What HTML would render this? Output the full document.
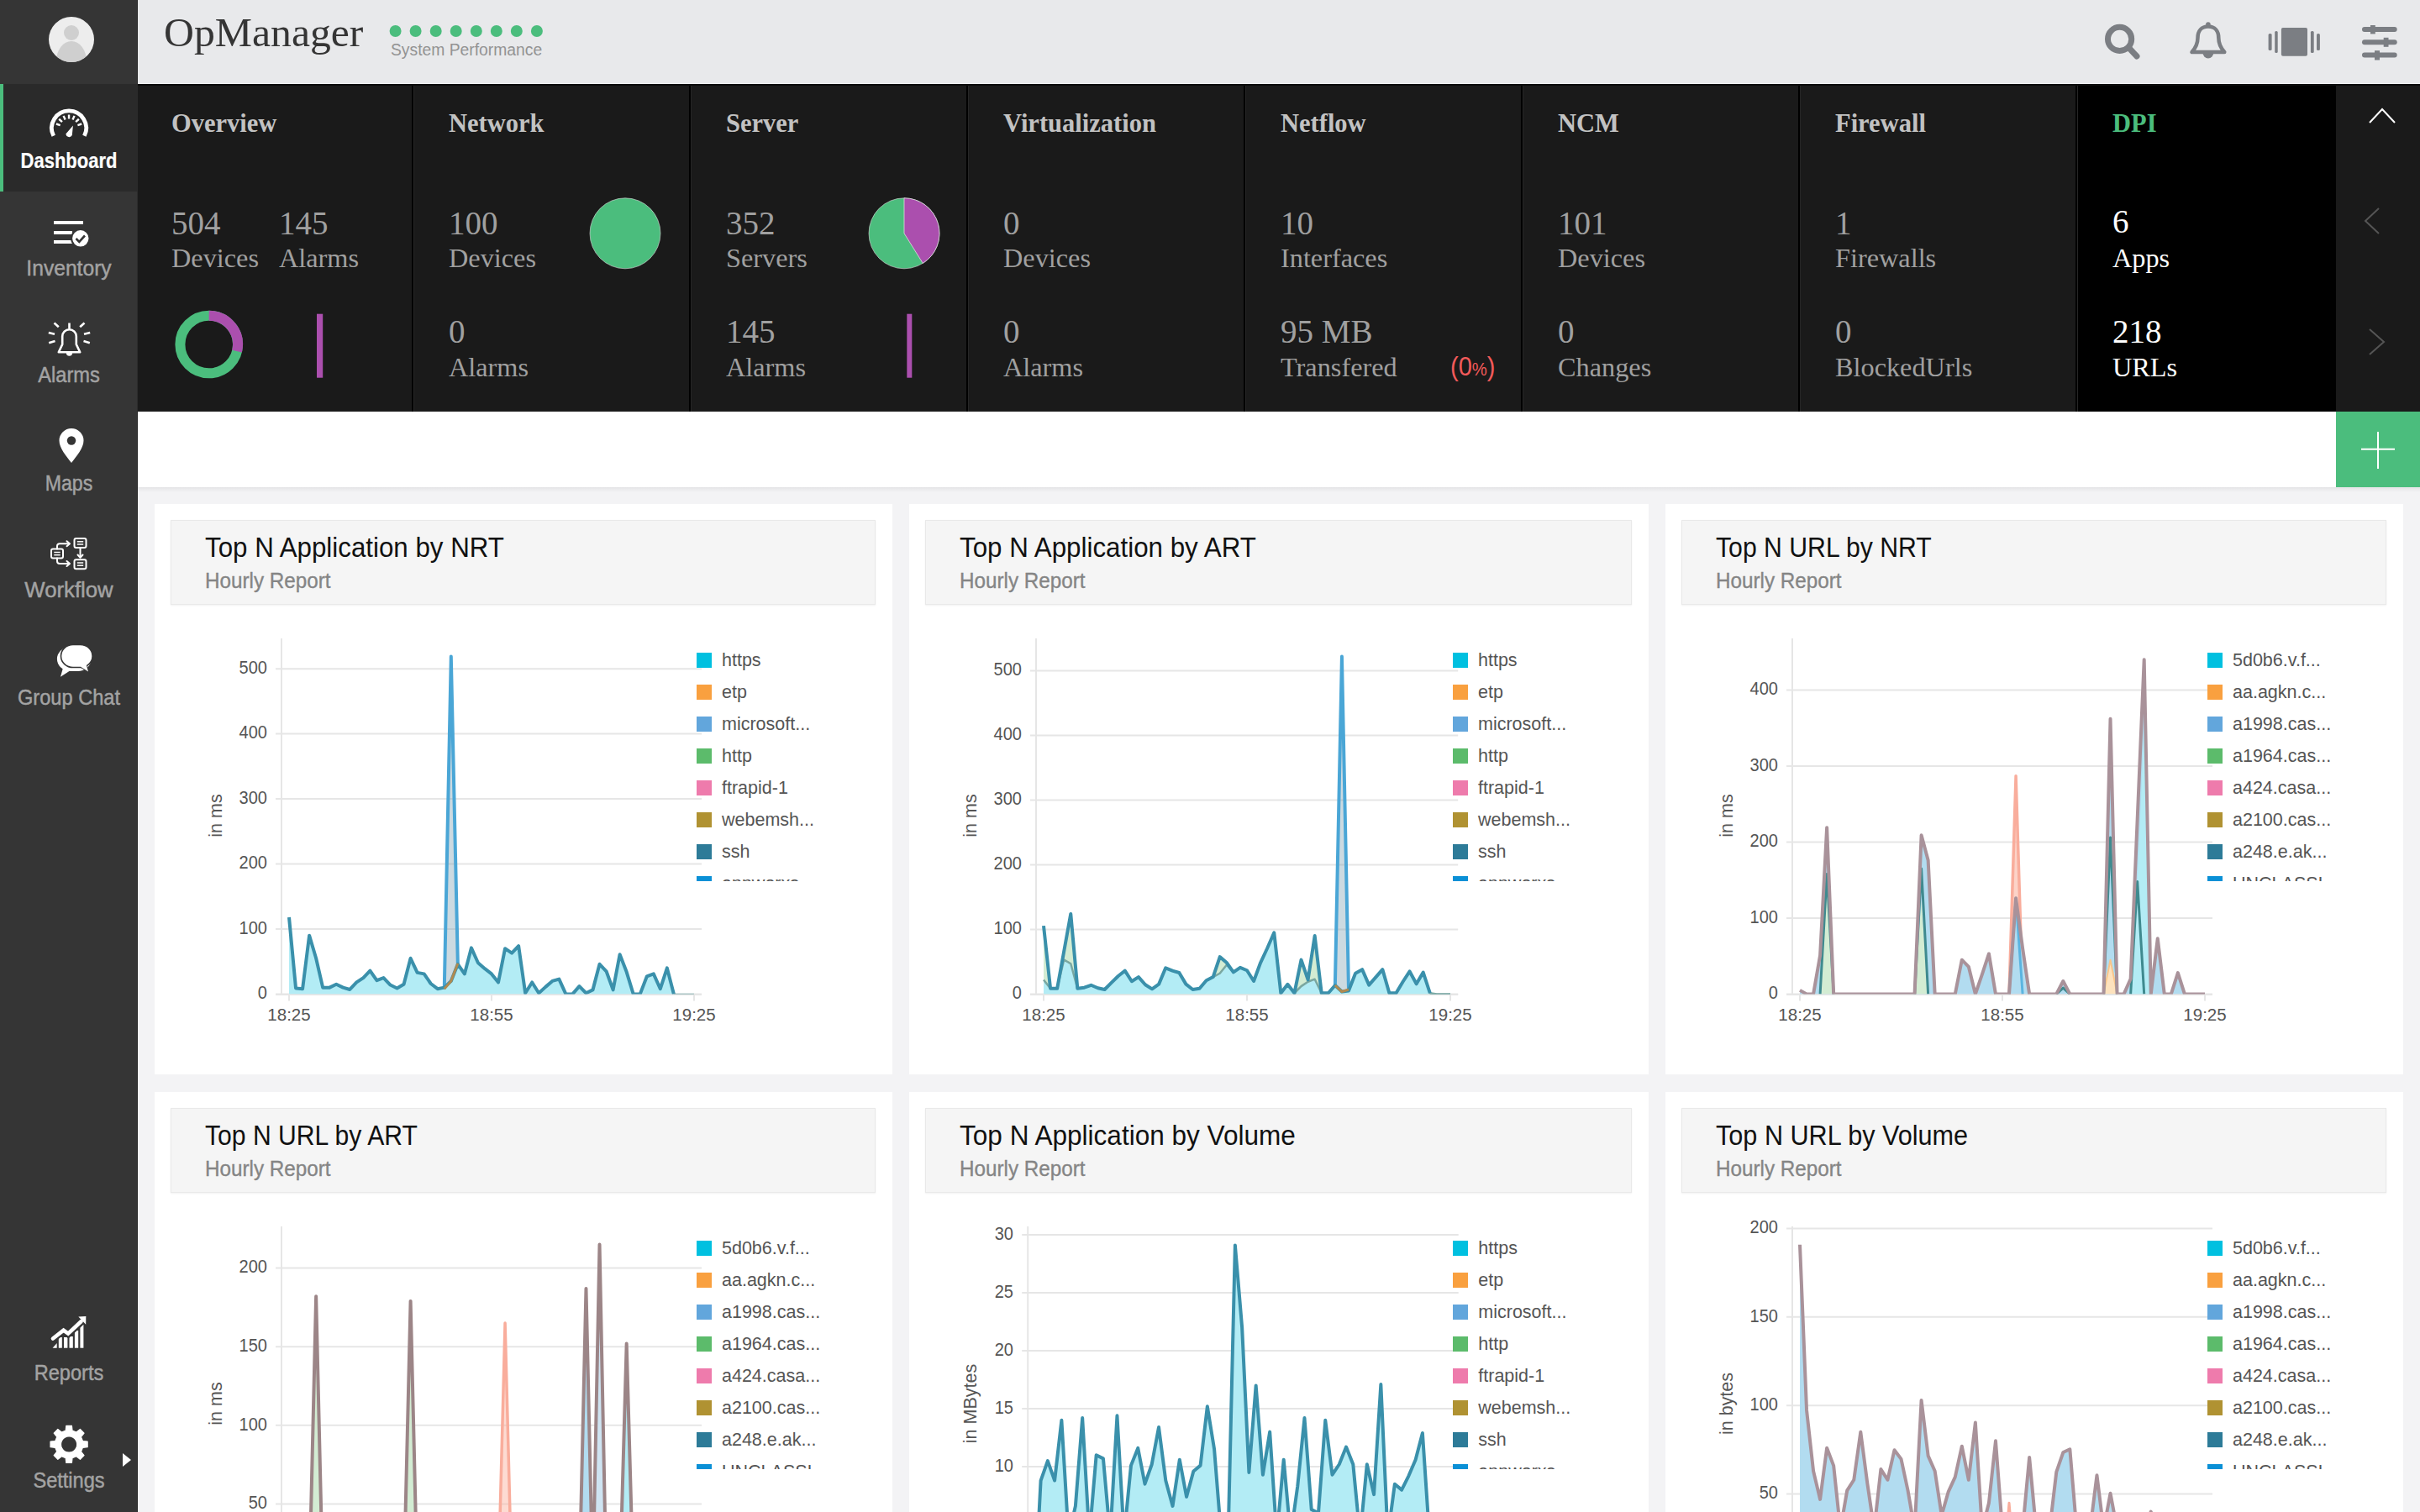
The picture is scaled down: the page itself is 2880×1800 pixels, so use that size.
<!DOCTYPE html>
<html><head><meta charset="utf-8"><title>OpManager</title>
<style>
html,body{margin:0;padding:0;}
body{width:2880px;height:1800px;overflow:hidden;position:relative;background:#f3f3f5;font-family:"Liberation Sans", sans-serif;}
</style></head><body>
<div style="position:absolute;left:0px;top:0px;width:164px;height:1800px;background:#353535;"></div>
<div style="position:absolute;left:163px;top:0px;width:1px;height:1800px;background:#2c2c2c;"></div>
<svg style="position:absolute;left:0;top:0" width="164" height="100">
<defs><clipPath id="avc"><circle cx="85" cy="47" r="27"/></clipPath></defs>
<circle cx="85" cy="47" r="27" fill="#ededed"/>
<g clip-path="url(#avc)"><circle cx="85" cy="39" r="9" fill="#cfcfcf"/>
<ellipse cx="85" cy="73" rx="18" ry="24" fill="#cfcfcf"/></g></svg>
<div style="position:absolute;left:0px;top:100px;width:164px;height:128px;background:#2a2a2a;"></div>
<div style="position:absolute;left:0px;top:100px;width:4px;height:128px;background:#4bbd7d;"></div>
<svg style="position:absolute;left:0;top:101px" width="164" height="128">
<path d="M63.74 60.73 A20.55 20.55 0 1 1 100.36 60.73" fill="none" stroke="#fff" stroke-width="4.8"/>
<g stroke="#fff" stroke-width="2.4" stroke-linecap="butt">
<line x1="71.68" y1="48.03" x2="66.93" y2="46.49"/><line x1="73.95" y1="44.11" x2="70.23" y2="40.76"/><line x1="77.62" y1="41.44" x2="75.58" y2="36.87"/><line x1="82.05" y1="40.50" x2="82.05" y2="35.50"/><line x1="86.48" y1="41.44" x2="88.52" y2="36.87"/><line x1="90.15" y1="44.11" x2="93.87" y2="40.76"/><line x1="92.42" y1="48.03" x2="97.17" y2="46.49"/>
</g>
<path d="M78.3 58.6 L86.9 48.6 L85.8 60 A4 4 0 0 1 78.3 58.6 Z" fill="#fff"/>
</svg>
<div style="position:absolute;left:82.00px;top:178.84px;font-family:'Liberation Sans', sans-serif;font-size:25px;line-height:25px;font-weight:700;color:#fff;white-space:nowrap;transform:translateX(-50%) scaleX(0.88);transform-origin:center center;-webkit-text-stroke:0.2px #fff;">Dashboard</div>
<svg style="position:absolute;left:0;top:240px" width="164" height="100">
<rect x="64" y="23" width="35" height="4" fill="#fff"/>
<rect x="64" y="35" width="22" height="4" fill="#fff"/>
<rect x="64" y="46" width="22" height="4" fill="#fff"/>
<circle cx="95.8" cy="43.8" r="10.7" fill="#fff" stroke="#353535" stroke-width="2"/>
<path d="M90.5 44 L94.3 47.8 L101 40.5" fill="none" stroke="#353535" stroke-width="2.6"/>
</svg>
<div style="position:absolute;left:82.00px;top:306.84px;font-family:'Liberation Sans', sans-serif;font-size:25px;line-height:25px;font-weight:400;color:#a3a3a3;white-space:nowrap;transform:translateX(-50%) scaleX(0.985);transform-origin:center center;-webkit-text-stroke:0.45px #a3a3a3;">Inventory</div>
<svg style="position:absolute;left:0;top:370px" width="164" height="60">
<path d="M69.8 49.3 L74.2 40 L74.2 30.5 A8.3 8.3 0 0 1 90.8 30.5 L90.8 40 L95.2 49.3 Z" fill="none" stroke="#fff" stroke-width="2.6" stroke-linejoin="round"/>
<line x1="82.5" y1="14.5" x2="82.5" y2="21.5" stroke="#fff" stroke-width="2.6"/>
<path d="M78.8 50 A3.7 3.7 0 0 0 86.2 50 Z" fill="#fff"/>
<g stroke="#fff" stroke-width="2.6" stroke-linecap="butt">
<line x1="64.5" y1="14.5" x2="69.8" y2="19.3"/>
<line x1="100.5" y1="14.5" x2="95.2" y2="19.3"/>
<line x1="57.8" y1="26" x2="65" y2="27.8"/>
<line x1="107.2" y1="26" x2="100" y2="27.8"/>
<line x1="58.2" y1="38.3" x2="65.5" y2="36"/>
<line x1="106.8" y1="38.3" x2="99.5" y2="36"/>
</g></svg>
<div style="position:absolute;left:82.00px;top:434.34px;font-family:'Liberation Sans', sans-serif;font-size:25px;line-height:25px;font-weight:400;color:#a3a3a3;white-space:nowrap;transform:translateX(-50%) scaleX(0.946);transform-origin:center center;-webkit-text-stroke:0.45px #a3a3a3;">Alarms</div>
<svg style="position:absolute;left:0;top:500px" width="164" height="60">
<path d="M85 51 C79 43 70.5 33.5 70.5 24.5 A14.5 14.5 0 0 1 99.5 24.5 C99.5 33.5 91 43 85 51 Z" fill="#fff"/>
<circle cx="85" cy="24.5" r="5.2" fill="#353535"/>
</svg>
<div style="position:absolute;left:82.00px;top:562.84px;font-family:'Liberation Sans', sans-serif;font-size:25px;line-height:25px;font-weight:400;color:#a3a3a3;white-space:nowrap;transform:translateX(-50%) scaleX(0.925);transform-origin:center center;-webkit-text-stroke:0.45px #a3a3a3;">Maps</div>
<svg style="position:absolute;left:0;top:630px" width="164" height="60">
<g fill="none" stroke="#fff" stroke-width="2" stroke-linecap="round" stroke-linejoin="round">
<rect x="88.5" y="11" width="14" height="11" rx="2"/>
<rect x="61" y="23.6" width="14" height="10.8" rx="2"/>
<rect x="88.5" y="36.2" width="14" height="11" rx="2"/>
<path d="M68 23.6 V20 Q68 17.2 71 17.2 H82"/>
<path d="M68 34.4 V38 Q68 41 71 41 H82"/>
<path d="M95.5 22 V33"/>
<path d="M79.5 14.2 L83 17.2 L79.5 20.2"/>
<path d="M79.5 38 L83 41 L79.5 44"/>
<path d="M92.5 30.5 L95.5 33.8 L98.5 30.5"/>
</g>
<g stroke="#fff" stroke-width="1.5"><line x1="91.8" y1="14.8" x2="99.2" y2="14.8"/><line x1="91.8" y1="18" x2="99.2" y2="18"/>
<line x1="64.3" y1="27.5" x2="71.7" y2="27.5"/><line x1="64.3" y1="30.7" x2="71.7" y2="30.7"/>
<line x1="91.8" y1="40" x2="99.2" y2="40"/><line x1="91.8" y1="43.2" x2="99.2" y2="43.2"/></g>
</svg>
<div style="position:absolute;left:82.00px;top:690.34px;font-family:'Liberation Sans', sans-serif;font-size:25px;line-height:25px;font-weight:400;color:#a3a3a3;white-space:nowrap;transform:translateX(-50%) scaleX(1.03);transform-origin:center center;-webkit-text-stroke:0.45px #a3a3a3;">Workflow</div>
<svg style="position:absolute;left:0;top:760px" width="164" height="60">
<rect x="67.9" y="10" width="40.6" height="29" rx="16" ry="14.5" fill="#fff"/>
<path d="M75 35 L72 45.7 L84 38 Z" fill="#fff"/>
<path d="M96.5 34.2 L105 39.5 L103.2 32.7 Z" fill="#fff" stroke="#353535" stroke-width="1.6" stroke-linejoin="miter"/>
<rect x="72.5" y="7.5" width="37.6" height="27" rx="14.5" ry="13.5" fill="#fff" stroke="#353535" stroke-width="1.6"/>
<path d="M95.5 33.6 L105 39.5 L102.7 31.5 Z" fill="#fff"/>
</svg>
<div style="position:absolute;left:82.00px;top:817.84px;font-family:'Liberation Sans', sans-serif;font-size:25px;line-height:25px;font-weight:400;color:#a3a3a3;white-space:nowrap;transform:translateX(-50%) scaleX(0.944);transform-origin:center center;-webkit-text-stroke:0.45px #a3a3a3;">Group Chat</div>
<svg style="position:absolute;left:0;top:1550px" width="164" height="60">
<g fill="#fff">
<path d="M62.6 54.7 L67.7 49 L67.7 54.7 Z"/>
<rect x="69.8" y="42" width="4" height="12.7"/>
<rect x="76" y="42" width="4.4" height="12.7"/>
<rect x="82.5" y="41" width="4.3" height="13.7"/>
<rect x="88.9" y="34" width="4.3" height="20.7"/>
<rect x="95.4" y="27" width="4" height="27.7"/>
</g>
<path d="M62.5 44 L75.6 33.6 L81.1 37.6 L97.5 22.5" fill="none" stroke="#353535" stroke-width="9" stroke-linejoin="miter" stroke-linecap="round"/>
<path d="M63 43.5 L75.6 33.6 L81.1 37.6 L96.5 23.3" fill="none" stroke="#fff" stroke-width="4.6" stroke-linejoin="miter" stroke-linecap="round"/>
<path d="M93.3 17.4 L102.3 17 L102.2 26.7 Z" fill="#fff"/>
</svg>
<div style="position:absolute;left:82.00px;top:1621.84px;font-family:'Liberation Sans', sans-serif;font-size:25px;line-height:25px;font-weight:400;color:#a3a3a3;white-space:nowrap;transform:translateX(-50%) scaleX(0.943);transform-origin:center center;-webkit-text-stroke:0.45px #a3a3a3;">Reports</div>
<svg style="position:absolute;left:0;top:1690px" width="164" height="110">
<path fill="#fff" fill-rule="evenodd" stroke="#fff" stroke-width="1.2" stroke-linejoin="round" d="M78.18 13.06 L78.80 7.34 L85.40 7.34 L86.02 13.06 L90.88 15.08 L95.36 11.47 L100.03 16.14 L96.42 20.62 L98.44 25.48 L104.16 26.10 L104.16 32.70 L98.44 33.32 L96.42 38.18 L100.03 42.66 L95.36 47.33 L90.88 43.72 L86.02 45.74 L85.40 51.46 L78.80 51.46 L78.18 45.74 L73.32 43.72 L68.84 47.33 L64.17 42.66 L67.78 38.18 L65.76 33.32 L60.04 32.70 L60.04 26.10 L65.76 25.48 L67.78 20.62 L64.17 16.14 L68.84 11.47 L73.32 15.08 Z M82.10 19.80 A9.6 9.6 0 1 0 82.11 19.80 Z"/>
<path d="M146 40 L156 48 L146 56 Z" fill="#fff"/>
</svg>
<div style="position:absolute;left:82.00px;top:1749.84px;font-family:'Liberation Sans', sans-serif;font-size:25px;line-height:25px;font-weight:400;color:#a3a3a3;white-space:nowrap;transform:translateX(-50%) scaleX(0.943);transform-origin:center center;-webkit-text-stroke:0.45px #a3a3a3;">Settings</div>
<div style="position:absolute;left:164px;top:0px;width:2716px;height:100px;background:#e8e9eb;"></div>
<div style="position:absolute;left:164px;top:99px;width:2716px;height:1px;background:#f3f4f5;"></div>
<div style="position:absolute;left:195.00px;top:15.38px;font-family:'Liberation Serif', serif;font-size:48.5px;line-height:48.5px;font-weight:400;color:#353535;white-space:nowrap;transform:scaleX(1.025);transform-origin:left center;">OpManager</div>
<svg style="position:absolute;left:0;top:0" width="700" height="100"><circle cx="470.6" cy="37" r="7" fill="#4bbd7d"/><circle cx="494.6" cy="37" r="7" fill="#4bbd7d"/><circle cx="518.7" cy="37" r="7" fill="#4bbd7d"/><circle cx="542.7" cy="37" r="7" fill="#4bbd7d"/><circle cx="566.8" cy="37" r="7" fill="#4bbd7d"/><circle cx="590.8" cy="37" r="7" fill="#4bbd7d"/><circle cx="614.8" cy="37" r="7" fill="#4bbd7d"/><circle cx="638.9" cy="37" r="7" fill="#4bbd7d"/></svg>
<div style="position:absolute;left:464.50px;top:49.07px;font-family:'Liberation Sans', sans-serif;font-size:20px;line-height:20px;font-weight:400;color:#939393;white-space:nowrap;transform:scaleX(0.965);transform-origin:left center;">System Performance</div>
<svg style="position:absolute;left:2480px;top:0" width="400" height="100">
<circle cx="42.6" cy="46.4" r="14.1" fill="none" stroke="#7b7e83" stroke-width="7"/>
<line x1="55" y1="58.5" x2="63" y2="67" stroke="#7b7e83" stroke-width="7" stroke-linecap="round"/>
<path d="M147.9 31.5 C140 31.5 135.5 37 135.5 45 C135.5 52 133 57 128.5 62 L167.3 62 C162.8 57 160.3 52 160.3 45 C160.3 37 155.8 31.5 147.9 31.5 Z" fill="none" stroke="#7b7e83" stroke-width="4.5" stroke-linejoin="round"/>
<circle cx="147.9" cy="29" r="2.8" fill="#7b7e83"/>
<path d="M141.5 63 A6.4 6.4 0 0 0 154.3 63 Z" fill="#7b7e83"/>
<rect x="234.9" y="33" width="31.1" height="33.8" rx="2" fill="#7b7e83"/>
<rect x="227.2" y="37" width="3.5" height="26" rx="1.5" fill="#7b7e83"/>
<rect x="219.6" y="40" width="4" height="20" rx="1.5" fill="#7b7e83"/>
<rect x="269.9" y="37" width="3.8" height="26" rx="1.5" fill="#7b7e83"/>
<rect x="277" y="40" width="3.9" height="20" rx="1.5" fill="#7b7e83"/>
<g stroke="#7b7e83" stroke-width="6" stroke-linecap="round">
<line x1="334" y1="35.1" x2="369.7" y2="35.1"/>
<line x1="334" y1="50.3" x2="369.7" y2="50.3"/>
<line x1="334" y1="65.6" x2="369.7" y2="65.6"/>
</g>
<rect x="341" y="30" width="5.8" height="10.4" fill="#7b7e83"/>
<rect x="356.7" y="44.8" width="5.8" height="11" fill="#7b7e83"/>
<rect x="346" y="60.2" width="6" height="11.3" fill="#7b7e83"/>
</svg>
<div style="position:absolute;left:164px;top:100px;width:2716px;height:390px;background:#1a1a1a;"></div>
<div style="position:absolute;left:2473px;top:100px;width:307px;height:390px;background:#000;"></div>
<div style="position:absolute;left:490px;top:100px;width:2px;height:390px;background:#000;"></div>
<div style="position:absolute;left:492px;top:100px;width:1px;height:390px;background:#262626;"></div>
<div style="position:absolute;left:820px;top:100px;width:2px;height:390px;background:#000;"></div>
<div style="position:absolute;left:822px;top:100px;width:1px;height:390px;background:#262626;"></div>
<div style="position:absolute;left:1150px;top:100px;width:2px;height:390px;background:#000;"></div>
<div style="position:absolute;left:1152px;top:100px;width:1px;height:390px;background:#262626;"></div>
<div style="position:absolute;left:1480px;top:100px;width:2px;height:390px;background:#000;"></div>
<div style="position:absolute;left:1482px;top:100px;width:1px;height:390px;background:#262626;"></div>
<div style="position:absolute;left:1810px;top:100px;width:2px;height:390px;background:#000;"></div>
<div style="position:absolute;left:1812px;top:100px;width:1px;height:390px;background:#262626;"></div>
<div style="position:absolute;left:2140px;top:100px;width:2px;height:390px;background:#000;"></div>
<div style="position:absolute;left:2142px;top:100px;width:1px;height:390px;background:#262626;"></div>
<div style="position:absolute;left:2470px;top:100px;width:2px;height:390px;background:#000;"></div>
<div style="position:absolute;left:2472px;top:100px;width:1px;height:390px;background:#262626;"></div>
<div style="position:absolute;left:164px;top:100px;width:2716px;height:2px;background:#0a0a0a;"></div>
<div style="position:absolute;left:204.00px;top:132.46px;font-family:'Liberation Serif', serif;font-size:30.5px;line-height:30.5px;font-weight:700;color:#c2c2c2;white-space:nowrap;">Overview</div>
<div style="position:absolute;left:534.00px;top:132.46px;font-family:'Liberation Serif', serif;font-size:30.5px;line-height:30.5px;font-weight:700;color:#c2c2c2;white-space:nowrap;">Network</div>
<div style="position:absolute;left:864.00px;top:132.46px;font-family:'Liberation Serif', serif;font-size:30.5px;line-height:30.5px;font-weight:700;color:#c2c2c2;white-space:nowrap;">Server</div>
<div style="position:absolute;left:1194.00px;top:132.46px;font-family:'Liberation Serif', serif;font-size:30.5px;line-height:30.5px;font-weight:700;color:#c2c2c2;white-space:nowrap;">Virtualization</div>
<div style="position:absolute;left:1524.00px;top:132.46px;font-family:'Liberation Serif', serif;font-size:30.5px;line-height:30.5px;font-weight:700;color:#c2c2c2;white-space:nowrap;">Netflow</div>
<div style="position:absolute;left:1854.00px;top:132.46px;font-family:'Liberation Serif', serif;font-size:30.5px;line-height:30.5px;font-weight:700;color:#c2c2c2;white-space:nowrap;">NCM</div>
<div style="position:absolute;left:2184.00px;top:132.46px;font-family:'Liberation Serif', serif;font-size:30.5px;line-height:30.5px;font-weight:700;color:#c2c2c2;white-space:nowrap;">Firewall</div>
<div style="position:absolute;left:2514.00px;top:132.46px;font-family:'Liberation Serif', serif;font-size:30.5px;line-height:30.5px;font-weight:700;color:#4bbd7d;white-space:nowrap;">DPI</div>
<div style="position:absolute;left:204.00px;top:245.54px;font-family:'Liberation Serif', serif;font-size:39px;line-height:39px;font-weight:400;color:#a0a0a0;white-space:nowrap;">504</div>
<div style="position:absolute;left:204.00px;top:291.62px;font-family:'Liberation Serif', serif;font-size:31.5px;line-height:31.5px;font-weight:400;color:#a0a0a0;white-space:nowrap;transform:scaleX(1.025);transform-origin:left center;">Devices</div>
<div style="position:absolute;left:332.00px;top:245.54px;font-family:'Liberation Serif', serif;font-size:39px;line-height:39px;font-weight:400;color:#a0a0a0;white-space:nowrap;">145</div>
<div style="position:absolute;left:332.00px;top:291.62px;font-family:'Liberation Serif', serif;font-size:31.5px;line-height:31.5px;font-weight:400;color:#a0a0a0;white-space:nowrap;transform:scaleX(1.025);transform-origin:left center;">Alarms</div>
<div style="position:absolute;left:534.00px;top:245.54px;font-family:'Liberation Serif', serif;font-size:39px;line-height:39px;font-weight:400;color:#a0a0a0;white-space:nowrap;">100</div>
<div style="position:absolute;left:534.00px;top:291.62px;font-family:'Liberation Serif', serif;font-size:31.5px;line-height:31.5px;font-weight:400;color:#a0a0a0;white-space:nowrap;transform:scaleX(1.025);transform-origin:left center;">Devices</div>
<div style="position:absolute;left:534.00px;top:374.84px;font-family:'Liberation Serif', serif;font-size:39px;line-height:39px;font-weight:400;color:#a0a0a0;white-space:nowrap;">0</div>
<div style="position:absolute;left:534.00px;top:421.62px;font-family:'Liberation Serif', serif;font-size:31.5px;line-height:31.5px;font-weight:400;color:#a0a0a0;white-space:nowrap;transform:scaleX(1.025);transform-origin:left center;">Alarms</div>
<div style="position:absolute;left:864.00px;top:245.54px;font-family:'Liberation Serif', serif;font-size:39px;line-height:39px;font-weight:400;color:#a0a0a0;white-space:nowrap;">352</div>
<div style="position:absolute;left:864.00px;top:291.62px;font-family:'Liberation Serif', serif;font-size:31.5px;line-height:31.5px;font-weight:400;color:#a0a0a0;white-space:nowrap;transform:scaleX(1.025);transform-origin:left center;">Servers</div>
<div style="position:absolute;left:864.00px;top:374.84px;font-family:'Liberation Serif', serif;font-size:39px;line-height:39px;font-weight:400;color:#a0a0a0;white-space:nowrap;">145</div>
<div style="position:absolute;left:864.00px;top:421.62px;font-family:'Liberation Serif', serif;font-size:31.5px;line-height:31.5px;font-weight:400;color:#a0a0a0;white-space:nowrap;transform:scaleX(1.025);transform-origin:left center;">Alarms</div>
<div style="position:absolute;left:1194.00px;top:245.54px;font-family:'Liberation Serif', serif;font-size:39px;line-height:39px;font-weight:400;color:#a0a0a0;white-space:nowrap;">0</div>
<div style="position:absolute;left:1194.00px;top:291.62px;font-family:'Liberation Serif', serif;font-size:31.5px;line-height:31.5px;font-weight:400;color:#a0a0a0;white-space:nowrap;transform:scaleX(1.025);transform-origin:left center;">Devices</div>
<div style="position:absolute;left:1194.00px;top:374.84px;font-family:'Liberation Serif', serif;font-size:39px;line-height:39px;font-weight:400;color:#a0a0a0;white-space:nowrap;">0</div>
<div style="position:absolute;left:1194.00px;top:421.62px;font-family:'Liberation Serif', serif;font-size:31.5px;line-height:31.5px;font-weight:400;color:#a0a0a0;white-space:nowrap;transform:scaleX(1.025);transform-origin:left center;">Alarms</div>
<div style="position:absolute;left:1524.00px;top:245.54px;font-family:'Liberation Serif', serif;font-size:39px;line-height:39px;font-weight:400;color:#a0a0a0;white-space:nowrap;">10</div>
<div style="position:absolute;left:1524.00px;top:291.62px;font-family:'Liberation Serif', serif;font-size:31.5px;line-height:31.5px;font-weight:400;color:#a0a0a0;white-space:nowrap;transform:scaleX(1.025);transform-origin:left center;">Interfaces</div>
<div style="position:absolute;left:1524.00px;top:374.84px;font-family:'Liberation Serif', serif;font-size:39px;line-height:39px;font-weight:400;color:#a0a0a0;white-space:nowrap;">95 MB</div>
<div style="position:absolute;left:1524.00px;top:421.62px;font-family:'Liberation Serif', serif;font-size:31.5px;line-height:31.5px;font-weight:400;color:#a0a0a0;white-space:nowrap;transform:scaleX(1.025);transform-origin:left center;">Transfered</div>
<div style="position:absolute;left:1854.00px;top:245.54px;font-family:'Liberation Serif', serif;font-size:39px;line-height:39px;font-weight:400;color:#a0a0a0;white-space:nowrap;">101</div>
<div style="position:absolute;left:1854.00px;top:291.62px;font-family:'Liberation Serif', serif;font-size:31.5px;line-height:31.5px;font-weight:400;color:#a0a0a0;white-space:nowrap;transform:scaleX(1.025);transform-origin:left center;">Devices</div>
<div style="position:absolute;left:1854.00px;top:374.84px;font-family:'Liberation Serif', serif;font-size:39px;line-height:39px;font-weight:400;color:#a0a0a0;white-space:nowrap;">0</div>
<div style="position:absolute;left:1854.00px;top:421.62px;font-family:'Liberation Serif', serif;font-size:31.5px;line-height:31.5px;font-weight:400;color:#a0a0a0;white-space:nowrap;transform:scaleX(1.025);transform-origin:left center;">Changes</div>
<div style="position:absolute;left:2184.00px;top:245.54px;font-family:'Liberation Serif', serif;font-size:39px;line-height:39px;font-weight:400;color:#a0a0a0;white-space:nowrap;">1</div>
<div style="position:absolute;left:2184.00px;top:291.62px;font-family:'Liberation Serif', serif;font-size:31.5px;line-height:31.5px;font-weight:400;color:#a0a0a0;white-space:nowrap;transform:scaleX(1.025);transform-origin:left center;">Firewalls</div>
<div style="position:absolute;left:2184.00px;top:374.84px;font-family:'Liberation Serif', serif;font-size:39px;line-height:39px;font-weight:400;color:#a0a0a0;white-space:nowrap;">0</div>
<div style="position:absolute;left:2184.00px;top:421.62px;font-family:'Liberation Serif', serif;font-size:31.5px;line-height:31.5px;font-weight:400;color:#a0a0a0;white-space:nowrap;transform:scaleX(1.025);transform-origin:left center;">BlockedUrls</div>
<div style="position:absolute;left:2514.00px;top:244.34px;font-family:'Liberation Serif', serif;font-size:39px;line-height:39px;font-weight:400;color:#ffffff;white-space:nowrap;">6</div>
<div style="position:absolute;left:2514.00px;top:291.62px;font-family:'Liberation Serif', serif;font-size:31.5px;line-height:31.5px;font-weight:400;color:#ffffff;white-space:nowrap;transform:scaleX(1.025);transform-origin:left center;">Apps</div>
<div style="position:absolute;left:2514.00px;top:374.84px;font-family:'Liberation Serif', serif;font-size:39px;line-height:39px;font-weight:400;color:#ffffff;white-space:nowrap;">218</div>
<div style="position:absolute;left:2514.00px;top:421.62px;font-family:'Liberation Serif', serif;font-size:31.5px;line-height:31.5px;font-weight:400;color:#ffffff;white-space:nowrap;transform:scaleX(1.025);transform-origin:left center;">URLs</div>
<div style="position:absolute;left:1726.00px;top:421.34px;font-family:'Liberation Sans', sans-serif;font-size:31.5px;line-height:31.5px;font-weight:400;color:#f25a5a;white-space:nowrap;transform:scaleX(0.92);transform-origin:left center;">(0<span style="font-size:22px">%</span>)</div>
<svg style="position:absolute;left:0;top:0" width="1200" height="490">
<circle cx="248.7" cy="410" r="34.3" fill="none" stroke="#4bbd7d" stroke-width="12"/>
<path d="M248.70 375.70 A34.3 34.3 0 0 1 282.04 418.07" fill="none" stroke="#ab4fae" stroke-width="12"/>
<line x1="282.04" y1="418.07" x2="276.21" y2="416.65" stroke="#1a1a1a" stroke-width="0"/>
<rect x="377" y="373.7" width="7.2" height="76" fill="#ab4fae"/>
<circle cx="744" cy="277.8" r="42" fill="#4bbd7d" stroke="#ddd" stroke-width="0.6"/>
<circle cx="1076" cy="277.8" r="42" fill="#4bbd7d" stroke="#ddd" stroke-width="0.6"/>
<path d="M1076 277.8 L1076.00 235.80 A42 42 0 0 1 1098.26 313.42 Z" fill="#ab4fae" stroke="#ddd" stroke-width="0.8"/>
<rect x="1079.3" y="373.7" width="6" height="76" fill="#ab4fae"/>
</svg>
<svg style="position:absolute;left:2780px;top:100px" width="100" height="390">
<path d="M40 46 L55 30 L70 46" fill="none" stroke="#fff" stroke-width="2"/>
<path d="M51 178 L35 163 L51 148" fill="none" stroke="#555" stroke-width="2"/>
<path d="M40 292 L57 307 L40 322" fill="none" stroke="#555" stroke-width="2"/>
</svg>
<div style="position:absolute;left:164px;top:490px;width:2616px;height:90px;background:#fff;"></div>
<div style="position:absolute;left:164px;top:580px;width:2716px;height:6px;background:linear-gradient(#e4e4e6,#f3f3f5);"></div>
<div style="position:absolute;left:2780px;top:490px;width:100px;height:90px;background:#4bbd7d;"></div>
<svg style="position:absolute;left:2780px;top:490px" width="100" height="90">
<line x1="30" y1="44.7" x2="70" y2="44.7" stroke="#fff" stroke-width="2"/>
<line x1="50" y1="24" x2="50" y2="68" stroke="#fff" stroke-width="2"/>
</svg>
<div style="position:absolute;left:184px;top:600px;width:878px;height:679px;background:#fff;"></div>
<div style="position:absolute;left:203px;top:619px;width:839px;height:101px;background:#f5f5f5;border:1px solid #e9e9e9;box-sizing:border-box;box-shadow:0 1px 2px rgba(0,0,0,0.06);"></div>
<div style="position:absolute;left:244.00px;top:635.47px;font-family:'Liberation Sans', sans-serif;font-size:33px;line-height:33px;font-weight:400;color:#111;white-space:nowrap;transform:scaleX(0.948);transform-origin:left center;">Top N Application by NRT</div>
<div style="position:absolute;left:244.00px;top:678.84px;font-family:'Liberation Sans', sans-serif;font-size:25px;line-height:25px;font-weight:400;color:#858585;white-space:nowrap;transform:scaleX(0.97);transform-origin:left center;-webkit-text-stroke:0.35px #858585;">Hourly Report</div>
<svg style="position:absolute;left:184px;top:600px;overflow:hidden" width="878" height="700"><defs><clipPath id="pc184600"><rect x="151" y="100" width="500" height="483.40"/></clipPath></defs><line x1="144" y1="583.40" x2="651" y2="583.40" stroke="#e6e6e6" stroke-width="2"/><line x1="144" y1="505.95" x2="651" y2="505.95" stroke="#e6e6e6" stroke-width="2"/><line x1="144" y1="428.50" x2="651" y2="428.50" stroke="#e6e6e6" stroke-width="2"/><line x1="144" y1="351.05" x2="651" y2="351.05" stroke="#e6e6e6" stroke-width="2"/><line x1="144" y1="273.60" x2="651" y2="273.60" stroke="#e6e6e6" stroke-width="2"/><line x1="144" y1="196.15" x2="651" y2="196.15" stroke="#e6e6e6" stroke-width="2"/><line x1="151" y1="160" x2="151" y2="584.40" stroke="#e6e6e6" stroke-width="2"/><line x1="144" y1="584.00" x2="651" y2="584.00" stroke="#e6e6e6" stroke-width="2"/><line x1="160.00" y1="583.40" x2="160.00" y2="591.40" stroke="#e6e6e6" stroke-width="2"/><line x1="401.00" y1="583.40" x2="401.00" y2="591.40" stroke="#e6e6e6" stroke-width="2"/><line x1="642.00" y1="583.40" x2="642.00" y2="591.40" stroke="#e6e6e6" stroke-width="2"/><g clip-path="url(#pc184600)"><path d="M160.00 492.01 L168.03 576.43 L176.07 577.20 L184.10 513.69 L192.13 540.80 L200.17 575.65 L208.20 575.65 L216.23 571.78 L224.27 575.65 L232.30 577.98 L240.33 569.46 L248.37 564.04 L256.40 555.52 L264.43 567.14 L272.47 564.04 L280.50 572.56 L288.53 576.43 L296.57 571.78 L304.60 540.80 L312.63 557.84 L320.67 559.39 L328.70 571.01 L336.73 577.20 L344.77 575.65 L352.80 567.91 L360.83 547.77 L368.87 559.39 L376.90 528.41 L384.93 546.22 L392.97 553.19 L401.00 559.39 L409.03 569.46 L417.07 529.18 L425.10 534.61 L433.13 526.09 L441.17 582.24 L449.20 569.46 L457.23 582.24 L465.27 574.88 L473.30 567.91 L481.33 565.59 L489.37 583.40 L497.40 583.40 L505.43 574.11 L513.47 582.24 L521.50 578.37 L529.53 547.77 L537.57 556.29 L545.60 578.37 L553.63 536.16 L561.67 557.07 L569.70 583.40 L577.73 583.40 L585.77 562.49 L593.80 559.39 L601.83 577.20 L609.87 552.42 L617.90 583.40 L625.93 583.40 L633.97 583.40 L642.00 583.40 L642.00 583.40 L160.00 583.40 Z" fill="#b3ecf5" stroke="none"/><path d="M344.77 577.20 L352.80 181.43 L360.83 547.00 L360.83 547.00 L352.80 567.91 L344.77 577.20 Z" fill="rgba(110,150,170,0.35)" stroke="none"/><path d="M344.77 577.20 L352.80 181.43 L360.83 547.00" fill="none" stroke="#4aa6d6" stroke-width="4" stroke-linejoin="round"/><path d="M160.00 492.01 L168.03 576.43 L176.07 577.20 L184.10 513.69 L192.13 540.80 L200.17 575.65 L208.20 575.65 L216.23 571.78 L224.27 575.65 L232.30 577.98 L240.33 569.46 L248.37 564.04 L256.40 555.52 L264.43 567.14 L272.47 564.04 L280.50 572.56 L288.53 576.43 L296.57 571.78 L304.60 540.80 L312.63 557.84 L320.67 559.39 L328.70 571.01 L336.73 577.20 L344.77 575.65 L352.80 567.91 L360.83 547.77 L368.87 559.39 L376.90 528.41 L384.93 546.22 L392.97 553.19 L401.00 559.39 L409.03 569.46 L417.07 529.18 L425.10 534.61 L433.13 526.09 L441.17 582.24 L449.20 569.46 L457.23 582.24 L465.27 574.88 L473.30 567.91 L481.33 565.59 L489.37 583.40 L497.40 583.40 L505.43 574.11 L513.47 582.24 L521.50 578.37 L529.53 547.77 L537.57 556.29 L545.60 578.37 L553.63 536.16 L561.67 557.07 L569.70 583.40 L577.73 583.40 L585.77 562.49 L593.80 559.39 L601.83 577.20 L609.87 552.42 L617.90 583.40" fill="none" stroke="#3a90ab" stroke-width="4" stroke-linejoin="round"/><path d="M344.77 577.20 L352.80 567.91 L360.83 547.00" fill="none" stroke="#b08a50" stroke-width="3" stroke-linejoin="round"/><path d="M617.90 583.40 L625.93 583.40 L633.97 583.40 L642.00 583.40" fill="none" stroke="#7aa" stroke-width="1.5" stroke-linejoin="round"/></g></svg>
<div style="position:absolute;right:2562.00px;top:1172.20px;font-family:'Liberation Sans', sans-serif;font-size:21.5px;line-height:21.5px;font-weight:400;color:#555;white-space:nowrap;transform:scaleX(0.93);transform-origin:right center;">0</div>
<div style="position:absolute;right:2562.00px;top:1094.75px;font-family:'Liberation Sans', sans-serif;font-size:21.5px;line-height:21.5px;font-weight:400;color:#555;white-space:nowrap;transform:scaleX(0.93);transform-origin:right center;">100</div>
<div style="position:absolute;right:2562.00px;top:1017.30px;font-family:'Liberation Sans', sans-serif;font-size:21.5px;line-height:21.5px;font-weight:400;color:#555;white-space:nowrap;transform:scaleX(0.93);transform-origin:right center;">200</div>
<div style="position:absolute;right:2562.00px;top:939.85px;font-family:'Liberation Sans', sans-serif;font-size:21.5px;line-height:21.5px;font-weight:400;color:#555;white-space:nowrap;transform:scaleX(0.93);transform-origin:right center;">300</div>
<div style="position:absolute;right:2562.00px;top:862.40px;font-family:'Liberation Sans', sans-serif;font-size:21.5px;line-height:21.5px;font-weight:400;color:#555;white-space:nowrap;transform:scaleX(0.93);transform-origin:right center;">400</div>
<div style="position:absolute;right:2562.00px;top:784.95px;font-family:'Liberation Sans', sans-serif;font-size:21.5px;line-height:21.5px;font-weight:400;color:#555;white-space:nowrap;transform:scaleX(0.93);transform-origin:right center;">500</div>
<div style="position:absolute;left:344.00px;top:1197.65px;font-family:'Liberation Sans', sans-serif;font-size:20.5px;line-height:20.5px;font-weight:400;color:#555;white-space:nowrap;transform:translateX(-50%) ;transform-origin:center center;">18:25</div>
<div style="position:absolute;left:585.00px;top:1197.65px;font-family:'Liberation Sans', sans-serif;font-size:20.5px;line-height:20.5px;font-weight:400;color:#555;white-space:nowrap;transform:translateX(-50%) ;transform-origin:center center;">18:55</div>
<div style="position:absolute;left:826.00px;top:1197.65px;font-family:'Liberation Sans', sans-serif;font-size:20.5px;line-height:20.5px;font-weight:400;color:#555;white-space:nowrap;transform:translateX(-50%) ;transform-origin:center center;">19:25</div>
<div style="position:absolute;left:257px;top:971px;width:0;height:0;"><div style="position:absolute;left:0;top:0;transform:translate(-50%,-50%) rotate(-90deg);font-family:'Liberation Sans', sans-serif;font-size:21.5px;line-height:22px;color:#555;white-space:nowrap;">in ms</div></div>
<div style="position:absolute;left:829px;top:600px;width:200px;height:449px;overflow:hidden;"><div style="position:absolute;left:0;top:177px;width:17.5px;height:17.5px;background:#00c0e0;"></div><div style="position:absolute;left:30px;top:175px;font-family:'Liberation Sans', sans-serif;font-size:21.5px;line-height:22px;color:#555;white-space:nowrap;">https</div><div style="position:absolute;left:0;top:215px;width:17.5px;height:17.5px;background:#f9a03f;"></div><div style="position:absolute;left:30px;top:213px;font-family:'Liberation Sans', sans-serif;font-size:21.5px;line-height:22px;color:#555;white-space:nowrap;">etp</div><div style="position:absolute;left:0;top:253px;width:17.5px;height:17.5px;background:#62a6dc;"></div><div style="position:absolute;left:30px;top:251px;font-family:'Liberation Sans', sans-serif;font-size:21.5px;line-height:22px;color:#555;white-space:nowrap;">microsoft...</div><div style="position:absolute;left:0;top:291px;width:17.5px;height:17.5px;background:#5cbb6b;"></div><div style="position:absolute;left:30px;top:289px;font-family:'Liberation Sans', sans-serif;font-size:21.5px;line-height:22px;color:#555;white-space:nowrap;">http</div><div style="position:absolute;left:0;top:329px;width:17.5px;height:17.5px;background:#ee7bac;"></div><div style="position:absolute;left:30px;top:327px;font-family:'Liberation Sans', sans-serif;font-size:21.5px;line-height:22px;color:#555;white-space:nowrap;">ftrapid-1</div><div style="position:absolute;left:0;top:367px;width:17.5px;height:17.5px;background:#b09232;"></div><div style="position:absolute;left:30px;top:365px;font-family:'Liberation Sans', sans-serif;font-size:21.5px;line-height:22px;color:#555;white-space:nowrap;">webemsh...</div><div style="position:absolute;left:0;top:405px;width:17.5px;height:17.5px;background:#2d7b98;"></div><div style="position:absolute;left:30px;top:403px;font-family:'Liberation Sans', sans-serif;font-size:21.5px;line-height:22px;color:#555;white-space:nowrap;">ssh</div><div style="position:absolute;left:0;top:443px;width:17.5px;height:17.5px;background:#0a90d6;"></div><div style="position:absolute;left:30px;top:441px;font-family:'Liberation Sans', sans-serif;font-size:21.5px;line-height:22px;color:#555;white-space:nowrap;">appworxs</div></div>
<div style="position:absolute;left:1082px;top:600px;width:880px;height:679px;background:#fff;"></div>
<div style="position:absolute;left:1101px;top:619px;width:841px;height:101px;background:#f5f5f5;border:1px solid #e9e9e9;box-sizing:border-box;box-shadow:0 1px 2px rgba(0,0,0,0.06);"></div>
<div style="position:absolute;left:1142.00px;top:635.47px;font-family:'Liberation Sans', sans-serif;font-size:33px;line-height:33px;font-weight:400;color:#111;white-space:nowrap;transform:scaleX(0.949);transform-origin:left center;">Top N Application by ART</div>
<div style="position:absolute;left:1142.00px;top:678.84px;font-family:'Liberation Sans', sans-serif;font-size:25px;line-height:25px;font-weight:400;color:#858585;white-space:nowrap;transform:scaleX(0.97);transform-origin:left center;-webkit-text-stroke:0.35px #858585;">Hourly Report</div>
<svg style="position:absolute;left:1082px;top:600px;overflow:hidden" width="878" height="700"><defs><clipPath id="pc1082600"><rect x="151" y="100" width="502.20000000000005" height="483.40"/></clipPath></defs><line x1="144" y1="583.40" x2="653.2" y2="583.40" stroke="#e6e6e6" stroke-width="2"/><line x1="144" y1="506.40" x2="653.2" y2="506.40" stroke="#e6e6e6" stroke-width="2"/><line x1="144" y1="429.40" x2="653.2" y2="429.40" stroke="#e6e6e6" stroke-width="2"/><line x1="144" y1="352.40" x2="653.2" y2="352.40" stroke="#e6e6e6" stroke-width="2"/><line x1="144" y1="275.40" x2="653.2" y2="275.40" stroke="#e6e6e6" stroke-width="2"/><line x1="144" y1="198.40" x2="653.2" y2="198.40" stroke="#e6e6e6" stroke-width="2"/><line x1="151" y1="160" x2="151" y2="584.40" stroke="#e6e6e6" stroke-width="2"/><line x1="144" y1="584.00" x2="653.2" y2="584.00" stroke="#e6e6e6" stroke-width="2"/><line x1="160.00" y1="583.40" x2="160.00" y2="591.40" stroke="#e6e6e6" stroke-width="2"/><line x1="402.00" y1="583.40" x2="402.00" y2="591.40" stroke="#e6e6e6" stroke-width="2"/><line x1="644.00" y1="583.40" x2="644.00" y2="591.40" stroke="#e6e6e6" stroke-width="2"/><g clip-path="url(#pc1082600)"><path d="M160.00 502.09 L168.07 576.78 L176.13 576.78 L184.20 532.58 L192.27 487.92 L200.33 576.78 L208.40 575.70 L216.47 572.77 L224.53 576.24 L232.60 578.01 L240.67 569.92 L248.73 561.99 L256.80 555.68 L264.87 568.23 L272.93 563.07 L281.00 572.24 L289.07 577.32 L297.13 571.62 L305.20 552.29 L313.27 555.68 L321.33 557.99 L329.40 571.62 L337.47 578.01 L345.53 576.78 L353.60 567.23 L361.67 563.07 L369.73 539.12 L377.80 545.98 L385.87 557.37 L393.93 551.83 L402.00 555.22 L410.07 568.00 L418.13 546.05 L426.20 528.73 L434.27 510.25 L442.33 582.25 L450.40 571.85 L458.47 582.25 L466.53 542.59 L474.60 566.46 L482.67 514.10 L490.73 582.25 L498.80 582.25 L506.87 573.00 L514.93 580.55 L523.00 579.55 L531.07 558.76 L539.13 554.14 L547.20 572.62 L555.27 563.38 L563.33 554.14 L571.40 582.25 L579.47 582.25 L587.53 568.77 L595.60 556.45 L603.67 571.31 L611.73 557.53 L619.80 582.25 L627.87 583.40 L635.93 583.40 L644.00 583.40 L644.00 583.40 L160.00 583.40 Z" fill="#d3ecd3" stroke="none"/><path d="M160.00 566.46 L168.07 576.78 L176.13 576.78 L184.20 542.59 L192.27 547.21 L200.33 576.78 L208.40 575.70 L216.47 572.77 L224.53 576.24 L232.60 578.01 L240.67 569.92 L248.73 561.99 L256.80 555.68 L264.87 568.23 L272.93 563.07 L281.00 572.24 L289.07 577.32 L297.13 571.62 L305.20 552.29 L313.27 555.68 L321.33 557.99 L329.40 571.62 L337.47 578.01 L345.53 576.78 L353.60 567.23 L361.67 563.07 L369.73 558.76 L377.80 548.75 L385.87 557.37 L393.93 551.83 L402.00 555.22 L410.07 568.00 L418.13 546.05 L426.20 528.73 L434.27 510.25 L442.33 582.25 L450.40 571.85 L458.47 582.25 L466.53 574.16 L474.60 568.77 L482.67 565.69 L490.73 582.25 L498.80 582.25 L506.87 573.00 L514.93 580.55 L523.00 579.55 L531.07 558.76 L539.13 554.14 L547.20 572.62 L555.27 563.38 L563.33 554.14 L571.40 582.25 L579.47 582.25 L587.53 568.77 L595.60 556.45 L603.67 571.31 L611.73 557.53 L619.80 582.25 L627.87 583.40 L635.93 583.40 L644.00 583.40 L644.00 583.40 L160.00 583.40 Z" fill="#b3ecf5" stroke="none"/><path d="M160.00 566.46 L168.07 576.78 L176.13 576.78 L184.20 542.59 L192.27 547.21 L200.33 576.78 L208.40 575.70 L216.47 572.77 L224.53 576.24 L232.60 578.01 L240.67 569.92 L248.73 561.99 L256.80 555.68 L264.87 568.23 L272.93 563.07 L281.00 572.24 L289.07 577.32 L297.13 571.62 L305.20 552.29 L313.27 555.68 L321.33 557.99 L329.40 571.62 L337.47 578.01 L345.53 576.78 L353.60 567.23 L361.67 563.07 L369.73 558.76 L377.80 548.75 L385.87 557.37 L393.93 551.83 L402.00 555.22 L410.07 568.00 L418.13 546.05 L426.20 528.73 L434.27 510.25 L442.33 582.25 L450.40 571.85 L458.47 582.25 L466.53 574.16 L474.60 568.77 L482.67 565.69 L490.73 582.25 L498.80 582.25 L506.87 573.00 L514.93 580.55 L523.00 579.55 L531.07 558.76 L539.13 554.14 L547.20 572.62 L555.27 563.38 L563.33 554.14 L571.40 582.25 L579.47 582.25 L587.53 568.77 L595.60 556.45 L603.67 571.31 L611.73 557.53 L619.80 582.25 L627.87 583.40 L635.93 583.40 L644.00 583.40" fill="none" stroke="#7aa7a0" stroke-width="2.5" stroke-linejoin="round"/><path d="M506.87 573.00 L514.93 181.46 L523.00 578.01 L523.00 578.01 L514.93 580.55 L506.87 573.00 Z" fill="rgba(110,150,170,0.35)" stroke="none"/><path d="M506.87 573.00 L514.93 181.46 L523.00 578.01" fill="none" stroke="#4aa6d6" stroke-width="4" stroke-linejoin="round"/><path d="M160.00 502.09 L168.07 576.78 L176.13 576.78 L184.20 532.58 L192.27 487.92 L200.33 576.78 L208.40 575.70 L216.47 572.77 L224.53 576.24 L232.60 578.01 L240.67 569.92 L248.73 561.99 L256.80 555.68 L264.87 568.23 L272.93 563.07 L281.00 572.24 L289.07 577.32 L297.13 571.62 L305.20 552.29 L313.27 555.68 L321.33 557.99 L329.40 571.62 L337.47 578.01 L345.53 576.78 L353.60 567.23 L361.67 563.07 L369.73 539.12 L377.80 545.98 L385.87 557.37 L393.93 551.83 L402.00 555.22 L410.07 568.00 L418.13 546.05 L426.20 528.73 L434.27 510.25 L442.33 582.25 L450.40 571.85 L458.47 582.25 L466.53 542.59 L474.60 566.46 L482.67 514.10 L490.73 582.25 L498.80 582.25 L506.87 573.00 L514.93 580.55 L523.00 579.55 L531.07 558.76 L539.13 554.14 L547.20 572.62 L555.27 563.38 L563.33 554.14 L571.40 582.25 L579.47 582.25 L587.53 568.77 L595.60 556.45 L603.67 571.31 L611.73 557.53 L619.80 582.25" fill="none" stroke="#3a90ab" stroke-width="4" stroke-linejoin="round"/><path d="M506.87 573.00 L514.93 580.55 L523.00 578.01" fill="none" stroke="#b08a50" stroke-width="3" stroke-linejoin="round"/><path d="M619.80 583.40 L627.87 583.40 L635.93 583.40 L644.00 583.40" fill="none" stroke="#7aa" stroke-width="1.5" stroke-linejoin="round"/></g></svg>
<div style="position:absolute;right:1664.00px;top:1172.20px;font-family:'Liberation Sans', sans-serif;font-size:21.5px;line-height:21.5px;font-weight:400;color:#555;white-space:nowrap;transform:scaleX(0.93);transform-origin:right center;">0</div>
<div style="position:absolute;right:1664.00px;top:1095.20px;font-family:'Liberation Sans', sans-serif;font-size:21.5px;line-height:21.5px;font-weight:400;color:#555;white-space:nowrap;transform:scaleX(0.93);transform-origin:right center;">100</div>
<div style="position:absolute;right:1664.00px;top:1018.20px;font-family:'Liberation Sans', sans-serif;font-size:21.5px;line-height:21.5px;font-weight:400;color:#555;white-space:nowrap;transform:scaleX(0.93);transform-origin:right center;">200</div>
<div style="position:absolute;right:1664.00px;top:941.20px;font-family:'Liberation Sans', sans-serif;font-size:21.5px;line-height:21.5px;font-weight:400;color:#555;white-space:nowrap;transform:scaleX(0.93);transform-origin:right center;">300</div>
<div style="position:absolute;right:1664.00px;top:864.20px;font-family:'Liberation Sans', sans-serif;font-size:21.5px;line-height:21.5px;font-weight:400;color:#555;white-space:nowrap;transform:scaleX(0.93);transform-origin:right center;">400</div>
<div style="position:absolute;right:1664.00px;top:787.20px;font-family:'Liberation Sans', sans-serif;font-size:21.5px;line-height:21.5px;font-weight:400;color:#555;white-space:nowrap;transform:scaleX(0.93);transform-origin:right center;">500</div>
<div style="position:absolute;left:1242.00px;top:1197.65px;font-family:'Liberation Sans', sans-serif;font-size:20.5px;line-height:20.5px;font-weight:400;color:#555;white-space:nowrap;transform:translateX(-50%) ;transform-origin:center center;">18:25</div>
<div style="position:absolute;left:1484.00px;top:1197.65px;font-family:'Liberation Sans', sans-serif;font-size:20.5px;line-height:20.5px;font-weight:400;color:#555;white-space:nowrap;transform:translateX(-50%) ;transform-origin:center center;">18:55</div>
<div style="position:absolute;left:1726.00px;top:1197.65px;font-family:'Liberation Sans', sans-serif;font-size:20.5px;line-height:20.5px;font-weight:400;color:#555;white-space:nowrap;transform:translateX(-50%) ;transform-origin:center center;">19:25</div>
<div style="position:absolute;left:1155px;top:971px;width:0;height:0;"><div style="position:absolute;left:0;top:0;transform:translate(-50%,-50%) rotate(-90deg);font-family:'Liberation Sans', sans-serif;font-size:21.5px;line-height:22px;color:#555;white-space:nowrap;">in ms</div></div>
<div style="position:absolute;left:1729px;top:600px;width:200px;height:449px;overflow:hidden;"><div style="position:absolute;left:0;top:177px;width:17.5px;height:17.5px;background:#00c0e0;"></div><div style="position:absolute;left:30px;top:175px;font-family:'Liberation Sans', sans-serif;font-size:21.5px;line-height:22px;color:#555;white-space:nowrap;">https</div><div style="position:absolute;left:0;top:215px;width:17.5px;height:17.5px;background:#f9a03f;"></div><div style="position:absolute;left:30px;top:213px;font-family:'Liberation Sans', sans-serif;font-size:21.5px;line-height:22px;color:#555;white-space:nowrap;">etp</div><div style="position:absolute;left:0;top:253px;width:17.5px;height:17.5px;background:#62a6dc;"></div><div style="position:absolute;left:30px;top:251px;font-family:'Liberation Sans', sans-serif;font-size:21.5px;line-height:22px;color:#555;white-space:nowrap;">microsoft...</div><div style="position:absolute;left:0;top:291px;width:17.5px;height:17.5px;background:#5cbb6b;"></div><div style="position:absolute;left:30px;top:289px;font-family:'Liberation Sans', sans-serif;font-size:21.5px;line-height:22px;color:#555;white-space:nowrap;">http</div><div style="position:absolute;left:0;top:329px;width:17.5px;height:17.5px;background:#ee7bac;"></div><div style="position:absolute;left:30px;top:327px;font-family:'Liberation Sans', sans-serif;font-size:21.5px;line-height:22px;color:#555;white-space:nowrap;">ftrapid-1</div><div style="position:absolute;left:0;top:367px;width:17.5px;height:17.5px;background:#b09232;"></div><div style="position:absolute;left:30px;top:365px;font-family:'Liberation Sans', sans-serif;font-size:21.5px;line-height:22px;color:#555;white-space:nowrap;">webemsh...</div><div style="position:absolute;left:0;top:405px;width:17.5px;height:17.5px;background:#2d7b98;"></div><div style="position:absolute;left:30px;top:403px;font-family:'Liberation Sans', sans-serif;font-size:21.5px;line-height:22px;color:#555;white-space:nowrap;">ssh</div><div style="position:absolute;left:0;top:443px;width:17.5px;height:17.5px;background:#0a90d6;"></div><div style="position:absolute;left:30px;top:441px;font-family:'Liberation Sans', sans-serif;font-size:21.5px;line-height:22px;color:#555;white-space:nowrap;">appworxs</div></div>
<div style="position:absolute;left:1982px;top:600px;width:878px;height:679px;background:#fff;"></div>
<div style="position:absolute;left:2001px;top:619px;width:839px;height:101px;background:#f5f5f5;border:1px solid #e9e9e9;box-sizing:border-box;box-shadow:0 1px 2px rgba(0,0,0,0.06);"></div>
<div style="position:absolute;left:2042.00px;top:635.47px;font-family:'Liberation Sans', sans-serif;font-size:33px;line-height:33px;font-weight:400;color:#111;white-space:nowrap;transform:scaleX(0.915);transform-origin:left center;">Top N URL by NRT</div>
<div style="position:absolute;left:2042.00px;top:678.84px;font-family:'Liberation Sans', sans-serif;font-size:25px;line-height:25px;font-weight:400;color:#858585;white-space:nowrap;transform:scaleX(0.97);transform-origin:left center;-webkit-text-stroke:0.35px #858585;">Hourly Report</div>
<svg style="position:absolute;left:1982px;top:600px;overflow:hidden" width="878" height="700"><defs><clipPath id="pc1982600"><rect x="151" y="100" width="500" height="483.40"/></clipPath></defs><line x1="144" y1="583.40" x2="651" y2="583.40" stroke="#e6e6e6" stroke-width="2"/><line x1="144" y1="492.90" x2="651" y2="492.90" stroke="#e6e6e6" stroke-width="2"/><line x1="144" y1="402.40" x2="651" y2="402.40" stroke="#e6e6e6" stroke-width="2"/><line x1="144" y1="311.90" x2="651" y2="311.90" stroke="#e6e6e6" stroke-width="2"/><line x1="144" y1="221.40" x2="651" y2="221.40" stroke="#e6e6e6" stroke-width="2"/><line x1="151" y1="160" x2="151" y2="584.40" stroke="#e6e6e6" stroke-width="2"/><line x1="144" y1="584.00" x2="651" y2="584.00" stroke="#e6e6e6" stroke-width="2"/><line x1="160.00" y1="583.40" x2="160.00" y2="591.40" stroke="#e6e6e6" stroke-width="2"/><line x1="401.00" y1="583.40" x2="401.00" y2="591.40" stroke="#e6e6e6" stroke-width="2"/><line x1="642.00" y1="583.40" x2="642.00" y2="591.40" stroke="#e6e6e6" stroke-width="2"/><g clip-path="url(#pc1982600)"><path d="M409.03 583.40 L417.07 323.66 L425.10 583.40 L425.10 583.40 L409.03 583.40 Z" fill="rgba(250,175,155,0.55)" stroke="none"/><path d="M409.03 583.40 L417.07 323.66 L425.10 583.40" fill="none" stroke="#f9ad9c" stroke-width="3.5" stroke-linejoin="round"/><path d="M160.00 578.88 L168.03 583.40 L176.07 583.40 L184.10 537.25 L192.13 385.20 L200.17 583.40 L208.20 583.40 L216.23 583.40 L224.27 583.40 L232.30 583.40 L240.33 583.40 L248.37 583.40 L256.40 583.40 L264.43 583.40 L272.47 583.40 L280.50 583.40 L288.53 583.40 L296.57 583.40 L304.60 394.25 L312.63 424.12 L320.67 583.40 L328.70 583.40 L336.73 583.40 L344.77 583.40 L352.80 542.67 L360.83 550.82 L368.87 583.40 L376.90 559.87 L384.93 535.43 L392.97 583.40 L401.00 583.40 L409.03 583.40 L417.07 469.37 L425.10 529.10 L433.13 583.40 L441.17 583.40 L449.20 583.40 L457.23 583.40 L465.27 583.40 L473.30 568.01 L481.33 583.40 L489.37 583.40 L497.40 583.40 L505.43 583.40 L513.47 583.40 L521.50 583.40 L529.53 255.79 L537.57 583.40 L545.60 583.40 L553.63 565.30 L561.67 375.25 L569.70 185.20 L577.73 583.40 L585.77 517.34 L593.80 583.40 L601.83 583.40 L609.87 558.06 L617.90 583.40 L625.93 583.40 L633.97 583.40 L642.00 583.40 L642.00 583.40 L160.00 583.40 Z" fill="#b2dcf0" stroke="none"/><path d="M184.10 583.40 L192.13 447.65 L200.17 583.40 L200.17 583.40 L184.10 583.40 Z" fill="#d3ecd3" stroke="none"/><path d="M296.57 583.40 L304.60 472.08 L312.63 583.40 L312.63 583.40 L296.57 583.40 Z" fill="#d3ecd3" stroke="none"/><path d="M553.63 583.40 L561.67 449.46 L569.70 265.74 L577.73 583.40 L577.73 583.40 L553.63 583.40 Z" fill="#b3ecf5" stroke="none"/><path d="M521.50 583.40 L529.53 542.67 L537.57 583.40 L537.57 583.40 L521.50 583.40 Z" fill="#fde2bd" stroke="none"/><path d="M521.50 583.40 L529.53 542.67 L537.57 583.40" fill="none" stroke="#f9c58a" stroke-width="2" stroke-linejoin="round"/><path d="M184.10 583.40 L192.13 440.41 L200.17 583.40" fill="none" stroke="#3f8a8f" stroke-width="3" stroke-linejoin="round"/><path d="M296.57 583.40 L304.60 434.07 L312.63 583.40" fill="none" stroke="#3f8a8f" stroke-width="3" stroke-linejoin="round"/><path d="M521.50 583.40 L529.53 396.97 L537.57 583.40" fill="none" stroke="#3f8a8f" stroke-width="3" stroke-linejoin="round"/><path d="M553.63 583.40 L561.67 449.46 L569.70 583.40" fill="none" stroke="#3f8a8f" stroke-width="3" stroke-linejoin="round"/><path d="M465.27 583.40 L473.30 576.16 L481.33 583.40" fill="none" stroke="#3f8a8f" stroke-width="3" stroke-linejoin="round"/><path d="M409.03 583.40 L417.07 469.37 L425.10 583.40" fill="none" stroke="#5ab4e0" stroke-width="3" stroke-linejoin="round"/><path d="M160.00 578.88 L168.03 583.40 L176.07 583.40 L184.10 537.25 L192.13 385.20 L200.17 583.40 L208.20 583.40 L216.23 583.40 L224.27 583.40 L232.30 583.40 L240.33 583.40 L248.37 583.40 L256.40 583.40 L264.43 583.40 L272.47 583.40 L280.50 583.40 L288.53 583.40 L296.57 583.40 L304.60 394.25 L312.63 424.12 L320.67 583.40 L328.70 583.40 L336.73 583.40 L344.77 583.40 L352.80 542.67 L360.83 550.82 L368.87 583.40 L376.90 559.87 L384.93 535.43 L392.97 583.40 L401.00 583.40 L409.03 583.40 L417.07 469.37 L425.10 529.10 L433.13 583.40 L441.17 583.40 L449.20 583.40 L457.23 583.40 L465.27 583.40 L473.30 568.01 L481.33 583.40 L489.37 583.40 L497.40 583.40 L505.43 583.40 L513.47 583.40 L521.50 583.40 L529.53 255.79 L537.57 583.40 L545.60 583.40 L553.63 565.30 L561.67 375.25 L569.70 185.20 L577.73 583.40 L585.77 517.34 L593.80 583.40 L601.83 583.40 L609.87 558.06 L617.90 583.40 L625.93 583.40 L633.97 583.40 L642.00 583.40" fill="none" stroke="#a9929a" stroke-width="4" stroke-linejoin="round"/></g></svg>
<div style="position:absolute;right:764.00px;top:1172.20px;font-family:'Liberation Sans', sans-serif;font-size:21.5px;line-height:21.5px;font-weight:400;color:#555;white-space:nowrap;transform:scaleX(0.93);transform-origin:right center;">0</div>
<div style="position:absolute;right:764.00px;top:1081.70px;font-family:'Liberation Sans', sans-serif;font-size:21.5px;line-height:21.5px;font-weight:400;color:#555;white-space:nowrap;transform:scaleX(0.93);transform-origin:right center;">100</div>
<div style="position:absolute;right:764.00px;top:991.20px;font-family:'Liberation Sans', sans-serif;font-size:21.5px;line-height:21.5px;font-weight:400;color:#555;white-space:nowrap;transform:scaleX(0.93);transform-origin:right center;">200</div>
<div style="position:absolute;right:764.00px;top:900.70px;font-family:'Liberation Sans', sans-serif;font-size:21.5px;line-height:21.5px;font-weight:400;color:#555;white-space:nowrap;transform:scaleX(0.93);transform-origin:right center;">300</div>
<div style="position:absolute;right:764.00px;top:810.20px;font-family:'Liberation Sans', sans-serif;font-size:21.5px;line-height:21.5px;font-weight:400;color:#555;white-space:nowrap;transform:scaleX(0.93);transform-origin:right center;">400</div>
<div style="position:absolute;left:2142.00px;top:1197.65px;font-family:'Liberation Sans', sans-serif;font-size:20.5px;line-height:20.5px;font-weight:400;color:#555;white-space:nowrap;transform:translateX(-50%) ;transform-origin:center center;">18:25</div>
<div style="position:absolute;left:2383.00px;top:1197.65px;font-family:'Liberation Sans', sans-serif;font-size:20.5px;line-height:20.5px;font-weight:400;color:#555;white-space:nowrap;transform:translateX(-50%) ;transform-origin:center center;">18:55</div>
<div style="position:absolute;left:2624.00px;top:1197.65px;font-family:'Liberation Sans', sans-serif;font-size:20.5px;line-height:20.5px;font-weight:400;color:#555;white-space:nowrap;transform:translateX(-50%) ;transform-origin:center center;">19:25</div>
<div style="position:absolute;left:2055px;top:971px;width:0;height:0;"><div style="position:absolute;left:0;top:0;transform:translate(-50%,-50%) rotate(-90deg);font-family:'Liberation Sans', sans-serif;font-size:21.5px;line-height:22px;color:#555;white-space:nowrap;">in ms</div></div>
<div style="position:absolute;left:2627px;top:600px;width:200px;height:449px;overflow:hidden;"><div style="position:absolute;left:0;top:177px;width:17.5px;height:17.5px;background:#00c0e0;"></div><div style="position:absolute;left:30px;top:175px;font-family:'Liberation Sans', sans-serif;font-size:21.5px;line-height:22px;color:#555;white-space:nowrap;">5d0b6.v.f...</div><div style="position:absolute;left:0;top:215px;width:17.5px;height:17.5px;background:#f9a03f;"></div><div style="position:absolute;left:30px;top:213px;font-family:'Liberation Sans', sans-serif;font-size:21.5px;line-height:22px;color:#555;white-space:nowrap;">aa.agkn.c...</div><div style="position:absolute;left:0;top:253px;width:17.5px;height:17.5px;background:#62a6dc;"></div><div style="position:absolute;left:30px;top:251px;font-family:'Liberation Sans', sans-serif;font-size:21.5px;line-height:22px;color:#555;white-space:nowrap;">a1998.cas...</div><div style="position:absolute;left:0;top:291px;width:17.5px;height:17.5px;background:#5cbb6b;"></div><div style="position:absolute;left:30px;top:289px;font-family:'Liberation Sans', sans-serif;font-size:21.5px;line-height:22px;color:#555;white-space:nowrap;">a1964.cas...</div><div style="position:absolute;left:0;top:329px;width:17.5px;height:17.5px;background:#ee7bac;"></div><div style="position:absolute;left:30px;top:327px;font-family:'Liberation Sans', sans-serif;font-size:21.5px;line-height:22px;color:#555;white-space:nowrap;">a424.casa...</div><div style="position:absolute;left:0;top:367px;width:17.5px;height:17.5px;background:#b09232;"></div><div style="position:absolute;left:30px;top:365px;font-family:'Liberation Sans', sans-serif;font-size:21.5px;line-height:22px;color:#555;white-space:nowrap;">a2100.cas...</div><div style="position:absolute;left:0;top:405px;width:17.5px;height:17.5px;background:#2d7b98;"></div><div style="position:absolute;left:30px;top:403px;font-family:'Liberation Sans', sans-serif;font-size:21.5px;line-height:22px;color:#555;white-space:nowrap;">a248.e.ak...</div><div style="position:absolute;left:0;top:443px;width:17.5px;height:17.5px;background:#0a90d6;"></div><div style="position:absolute;left:30px;top:441px;font-family:'Liberation Sans', sans-serif;font-size:21.5px;line-height:22px;color:#555;white-space:nowrap;">UNCLASSI</div></div>
<div style="position:absolute;left:184px;top:1300px;width:878px;height:600px;background:#fff;"></div>
<div style="position:absolute;left:203px;top:1319px;width:839px;height:101px;background:#f5f5f5;border:1px solid #e9e9e9;box-sizing:border-box;box-shadow:0 1px 2px rgba(0,0,0,0.06);"></div>
<div style="position:absolute;left:244.00px;top:1335.47px;font-family:'Liberation Sans', sans-serif;font-size:33px;line-height:33px;font-weight:400;color:#111;white-space:nowrap;transform:scaleX(0.913);transform-origin:left center;">Top N URL by ART</div>
<div style="position:absolute;left:244.00px;top:1378.84px;font-family:'Liberation Sans', sans-serif;font-size:25px;line-height:25px;font-weight:400;color:#858585;white-space:nowrap;transform:scaleX(0.97);transform-origin:left center;-webkit-text-stroke:0.35px #858585;">Hourly Report</div>
<svg style="position:absolute;left:184px;top:1300px;overflow:hidden" width="878" height="700"><defs><clipPath id="pc1841300"><rect x="151" y="100" width="500" height="484.00"/></clipPath></defs><line x1="144" y1="490.40" x2="651" y2="490.40" stroke="#e6e6e6" stroke-width="2"/><line x1="144" y1="396.80" x2="651" y2="396.80" stroke="#e6e6e6" stroke-width="2"/><line x1="144" y1="303.20" x2="651" y2="303.20" stroke="#e6e6e6" stroke-width="2"/><line x1="144" y1="209.60" x2="651" y2="209.60" stroke="#e6e6e6" stroke-width="2"/><line x1="151" y1="160" x2="151" y2="585.00" stroke="#e6e6e6" stroke-width="2"/><line x1="144" y1="584.60" x2="651" y2="584.60" stroke="#e6e6e6" stroke-width="2"/><line x1="160.00" y1="584.00" x2="160.00" y2="592.00" stroke="#e6e6e6" stroke-width="2"/><line x1="401.00" y1="584.00" x2="401.00" y2="592.00" stroke="#e6e6e6" stroke-width="2"/><line x1="642.00" y1="584.00" x2="642.00" y2="592.00" stroke="#e6e6e6" stroke-width="2"/><g clip-path="url(#pc1841300)"><path d="M409.03 584.00 L417.07 275.12 L425.10 584.00 L425.10 584.00 L409.03 584.00 Z" fill="rgba(250,175,155,0.45)" stroke="none"/><path d="M409.03 584.00 L417.07 275.12 L425.10 584.00" fill="none" stroke="#f9ad9c" stroke-width="3.5" stroke-linejoin="round"/><path d="M184.10 584.00 L192.13 243.30 L200.17 584.00 L200.17 584.00 L184.10 584.00 Z" fill="#d3ecd3" stroke="none"/><path d="M296.57 584.00 L304.60 248.91 L312.63 584.00 L312.63 584.00 L296.57 584.00 Z" fill="#d3ecd3" stroke="none"/><path d="M505.43 584.00 L513.47 233.94 L521.50 584.00 L521.50 584.00 L505.43 584.00 Z" fill="#b2dcf0" stroke="none"/><path d="M521.50 584.00 L529.53 181.52 L537.57 584.00 L537.57 584.00 L521.50 584.00 Z" fill="#cfe4f2" stroke="none"/><path d="M553.63 584.00 L561.67 299.46 L569.70 584.00 L569.70 584.00 L553.63 584.00 Z" fill="#b3ecf5" stroke="none"/><path d="M160.00 584.00 L168.03 584.00 L176.07 584.00 L184.10 584.00 L192.13 243.30 L200.17 584.00 L208.20 584.00 L216.23 584.00 L224.27 584.00 L232.30 584.00 L240.33 584.00 L248.37 584.00 L256.40 584.00 L264.43 584.00 L272.47 584.00 L280.50 584.00 L288.53 584.00 L296.57 584.00 L304.60 248.91 L312.63 584.00 L320.67 584.00 L328.70 584.00 L336.73 584.00 L344.77 584.00 L352.80 584.00 L360.83 584.00 L368.87 584.00 L376.90 584.00 L384.93 584.00 L392.97 584.00 L401.00 584.00 L409.03 584.00 L417.07 584.00 L425.10 584.00 L433.13 584.00 L441.17 584.00 L449.20 584.00 L457.23 584.00 L465.27 584.00 L473.30 584.00 L481.33 584.00 L489.37 584.00 L497.40 584.00 L505.43 584.00 L513.47 233.94 L521.50 584.00 L529.53 181.52 L537.57 584.00 L545.60 584.00 L553.63 584.00 L561.67 299.46 L569.70 584.00 L577.73 584.00 L585.77 584.00 L593.80 584.00 L601.83 584.00 L609.87 584.00 L617.90 584.00 L625.93 584.00 L633.97 584.00 L642.00 584.00" fill="none" stroke="#9c8587" stroke-width="4" stroke-linejoin="round"/></g></svg>
<div style="position:absolute;right:2562.00px;top:1779.20px;font-family:'Liberation Sans', sans-serif;font-size:21.5px;line-height:21.5px;font-weight:400;color:#555;white-space:nowrap;transform:scaleX(0.93);transform-origin:right center;">50</div>
<div style="position:absolute;right:2562.00px;top:1685.60px;font-family:'Liberation Sans', sans-serif;font-size:21.5px;line-height:21.5px;font-weight:400;color:#555;white-space:nowrap;transform:scaleX(0.93);transform-origin:right center;">100</div>
<div style="position:absolute;right:2562.00px;top:1592.00px;font-family:'Liberation Sans', sans-serif;font-size:21.5px;line-height:21.5px;font-weight:400;color:#555;white-space:nowrap;transform:scaleX(0.93);transform-origin:right center;">150</div>
<div style="position:absolute;right:2562.00px;top:1498.40px;font-family:'Liberation Sans', sans-serif;font-size:21.5px;line-height:21.5px;font-weight:400;color:#555;white-space:nowrap;transform:scaleX(0.93);transform-origin:right center;">200</div>
<div style="position:absolute;left:344.00px;top:1897.65px;font-family:'Liberation Sans', sans-serif;font-size:20.5px;line-height:20.5px;font-weight:400;color:#555;white-space:nowrap;transform:translateX(-50%) ;transform-origin:center center;">18:25</div>
<div style="position:absolute;left:585.00px;top:1897.65px;font-family:'Liberation Sans', sans-serif;font-size:20.5px;line-height:20.5px;font-weight:400;color:#555;white-space:nowrap;transform:translateX(-50%) ;transform-origin:center center;">18:55</div>
<div style="position:absolute;left:826.00px;top:1897.65px;font-family:'Liberation Sans', sans-serif;font-size:20.5px;line-height:20.5px;font-weight:400;color:#555;white-space:nowrap;transform:translateX(-50%) ;transform-origin:center center;">19:25</div>
<div style="position:absolute;left:257px;top:1671px;width:0;height:0;"><div style="position:absolute;left:0;top:0;transform:translate(-50%,-50%) rotate(-90deg);font-family:'Liberation Sans', sans-serif;font-size:21.5px;line-height:22px;color:#555;white-space:nowrap;">in ms</div></div>
<div style="position:absolute;left:829px;top:1300px;width:200px;height:449px;overflow:hidden;"><div style="position:absolute;left:0;top:177px;width:17.5px;height:17.5px;background:#00c0e0;"></div><div style="position:absolute;left:30px;top:175px;font-family:'Liberation Sans', sans-serif;font-size:21.5px;line-height:22px;color:#555;white-space:nowrap;">5d0b6.v.f...</div><div style="position:absolute;left:0;top:215px;width:17.5px;height:17.5px;background:#f9a03f;"></div><div style="position:absolute;left:30px;top:213px;font-family:'Liberation Sans', sans-serif;font-size:21.5px;line-height:22px;color:#555;white-space:nowrap;">aa.agkn.c...</div><div style="position:absolute;left:0;top:253px;width:17.5px;height:17.5px;background:#62a6dc;"></div><div style="position:absolute;left:30px;top:251px;font-family:'Liberation Sans', sans-serif;font-size:21.5px;line-height:22px;color:#555;white-space:nowrap;">a1998.cas...</div><div style="position:absolute;left:0;top:291px;width:17.5px;height:17.5px;background:#5cbb6b;"></div><div style="position:absolute;left:30px;top:289px;font-family:'Liberation Sans', sans-serif;font-size:21.5px;line-height:22px;color:#555;white-space:nowrap;">a1964.cas...</div><div style="position:absolute;left:0;top:329px;width:17.5px;height:17.5px;background:#ee7bac;"></div><div style="position:absolute;left:30px;top:327px;font-family:'Liberation Sans', sans-serif;font-size:21.5px;line-height:22px;color:#555;white-space:nowrap;">a424.casa...</div><div style="position:absolute;left:0;top:367px;width:17.5px;height:17.5px;background:#b09232;"></div><div style="position:absolute;left:30px;top:365px;font-family:'Liberation Sans', sans-serif;font-size:21.5px;line-height:22px;color:#555;white-space:nowrap;">a2100.cas...</div><div style="position:absolute;left:0;top:405px;width:17.5px;height:17.5px;background:#2d7b98;"></div><div style="position:absolute;left:30px;top:403px;font-family:'Liberation Sans', sans-serif;font-size:21.5px;line-height:22px;color:#555;white-space:nowrap;">a248.e.ak...</div><div style="position:absolute;left:0;top:443px;width:17.5px;height:17.5px;background:#0a90d6;"></div><div style="position:absolute;left:30px;top:441px;font-family:'Liberation Sans', sans-serif;font-size:21.5px;line-height:22px;color:#555;white-space:nowrap;">UNCLASSI</div></div>
<div style="position:absolute;left:1082px;top:1300px;width:880px;height:600px;background:#fff;"></div>
<div style="position:absolute;left:1101px;top:1319px;width:841px;height:101px;background:#f5f5f5;border:1px solid #e9e9e9;box-sizing:border-box;box-shadow:0 1px 2px rgba(0,0,0,0.06);"></div>
<div style="position:absolute;left:1142.00px;top:1335.47px;font-family:'Liberation Sans', sans-serif;font-size:33px;line-height:33px;font-weight:400;color:#111;white-space:nowrap;transform:scaleX(0.956);transform-origin:left center;">Top N Application by Volume</div>
<div style="position:absolute;left:1142.00px;top:1378.84px;font-family:'Liberation Sans', sans-serif;font-size:25px;line-height:25px;font-weight:400;color:#858585;white-space:nowrap;transform:scaleX(0.97);transform-origin:left center;-webkit-text-stroke:0.35px #858585;">Hourly Report</div>
<svg style="position:absolute;left:1082px;top:1300px;overflow:hidden" width="878" height="700"><defs><clipPath id="pc10821300"><rect x="141.2" y="100" width="512.5" height="484.00"/></clipPath></defs><line x1="134.2" y1="446.00" x2="653.7" y2="446.00" stroke="#e6e6e6" stroke-width="2"/><line x1="134.2" y1="377.00" x2="653.7" y2="377.00" stroke="#e6e6e6" stroke-width="2"/><line x1="134.2" y1="308.00" x2="653.7" y2="308.00" stroke="#e6e6e6" stroke-width="2"/><line x1="134.2" y1="239.00" x2="653.7" y2="239.00" stroke="#e6e6e6" stroke-width="2"/><line x1="134.2" y1="170.00" x2="653.7" y2="170.00" stroke="#e6e6e6" stroke-width="2"/><line x1="141.2" y1="160" x2="141.2" y2="585.00" stroke="#e6e6e6" stroke-width="2"/><line x1="134.2" y1="584.60" x2="653.7" y2="584.60" stroke="#e6e6e6" stroke-width="2"/><line x1="156.60" y1="584.00" x2="156.60" y2="592.00" stroke="#e6e6e6" stroke-width="2"/><line x1="404.40" y1="584.00" x2="404.40" y2="592.00" stroke="#e6e6e6" stroke-width="2"/><line x1="652.20" y1="584.00" x2="652.20" y2="592.00" stroke="#e6e6e6" stroke-width="2"/><g clip-path="url(#pc10821300)"><path d="M152.47 542.60 L156.60 462.56 L164.86 439.10 L173.12 462.56 L181.38 390.80 L189.64 528.80 L197.90 492.92 L206.16 388.04 L214.42 528.80 L222.68 432.20 L230.94 436.34 L239.20 528.80 L247.46 385.28 L255.72 528.80 L263.98 444.62 L272.24 423.92 L280.50 466.70 L288.76 443.24 L297.02 399.08 L305.28 462.56 L313.54 492.92 L321.80 437.72 L330.06 481.88 L338.32 451.52 L346.58 444.62 L354.84 374.24 L363.10 425.30 L371.36 528.80 L379.62 528.80 L387.88 182.42 L396.14 280.40 L404.40 452.90 L412.66 349.40 L420.92 455.66 L429.18 404.60 L437.44 528.80 L445.70 437.72 L453.96 528.80 L462.22 469.46 L470.48 388.04 L478.74 497.06 L487.00 501.20 L495.26 390.80 L503.52 455.66 L511.78 443.24 L520.04 422.54 L528.30 443.24 L536.56 528.80 L544.82 443.24 L553.08 479.12 L561.34 348.02 L569.60 528.80 L577.86 466.70 L586.12 473.60 L594.38 457.04 L602.64 437.72 L610.90 405.98 L619.16 528.80 L627.42 584.00 L635.68 584.00 L643.94 584.00 L652.20 584.00 L652.20 584.00 L152.47 584.00 Z" fill="#b3ecf5" stroke="none"/><path d="M152.47 542.60 L156.60 462.56 L164.86 439.10 L173.12 462.56 L181.38 390.80 L189.64 528.80 L197.90 492.92 L206.16 388.04 L214.42 528.80 L222.68 432.20 L230.94 436.34 L239.20 528.80 L247.46 385.28 L255.72 528.80 L263.98 444.62 L272.24 423.92 L280.50 466.70 L288.76 443.24 L297.02 399.08 L305.28 462.56 L313.54 492.92 L321.80 437.72 L330.06 481.88 L338.32 451.52 L346.58 444.62 L354.84 374.24 L363.10 425.30 L371.36 528.80 L379.62 528.80 L387.88 182.42 L396.14 280.40 L404.40 452.90 L412.66 349.40 L420.92 455.66 L429.18 404.60 L437.44 528.80 L445.70 437.72 L453.96 528.80 L462.22 469.46 L470.48 388.04 L478.74 497.06 L487.00 501.20 L495.26 390.80 L503.52 455.66 L511.78 443.24 L520.04 422.54 L528.30 443.24 L536.56 528.80 L544.82 443.24 L553.08 479.12 L561.34 348.02 L569.60 528.80 L577.86 466.70 L586.12 473.60 L594.38 457.04 L602.64 437.72 L610.90 405.98 L619.16 528.80" fill="none" stroke="#3a90ab" stroke-width="4" stroke-linejoin="round"/></g></svg>
<div style="position:absolute;right:1673.80px;top:1734.80px;font-family:'Liberation Sans', sans-serif;font-size:21.5px;line-height:21.5px;font-weight:400;color:#555;white-space:nowrap;transform:scaleX(0.93);transform-origin:right center;">10</div>
<div style="position:absolute;right:1673.80px;top:1665.80px;font-family:'Liberation Sans', sans-serif;font-size:21.5px;line-height:21.5px;font-weight:400;color:#555;white-space:nowrap;transform:scaleX(0.93);transform-origin:right center;">15</div>
<div style="position:absolute;right:1673.80px;top:1596.80px;font-family:'Liberation Sans', sans-serif;font-size:21.5px;line-height:21.5px;font-weight:400;color:#555;white-space:nowrap;transform:scaleX(0.93);transform-origin:right center;">20</div>
<div style="position:absolute;right:1673.80px;top:1527.80px;font-family:'Liberation Sans', sans-serif;font-size:21.5px;line-height:21.5px;font-weight:400;color:#555;white-space:nowrap;transform:scaleX(0.93);transform-origin:right center;">25</div>
<div style="position:absolute;right:1673.80px;top:1458.80px;font-family:'Liberation Sans', sans-serif;font-size:21.5px;line-height:21.5px;font-weight:400;color:#555;white-space:nowrap;transform:scaleX(0.93);transform-origin:right center;">30</div>
<div style="position:absolute;left:1238.60px;top:1897.65px;font-family:'Liberation Sans', sans-serif;font-size:20.5px;line-height:20.5px;font-weight:400;color:#555;white-space:nowrap;transform:translateX(-50%) ;transform-origin:center center;">18:25</div>
<div style="position:absolute;left:1486.40px;top:1897.65px;font-family:'Liberation Sans', sans-serif;font-size:20.5px;line-height:20.5px;font-weight:400;color:#555;white-space:nowrap;transform:translateX(-50%) ;transform-origin:center center;">18:55</div>
<div style="position:absolute;left:1734.20px;top:1897.65px;font-family:'Liberation Sans', sans-serif;font-size:20.5px;line-height:20.5px;font-weight:400;color:#555;white-space:nowrap;transform:translateX(-50%) ;transform-origin:center center;">19:25</div>
<div style="position:absolute;left:1155px;top:1671px;width:0;height:0;"><div style="position:absolute;left:0;top:0;transform:translate(-50%,-50%) rotate(-90deg);font-family:'Liberation Sans', sans-serif;font-size:21.5px;line-height:22px;color:#555;white-space:nowrap;">in MBytes</div></div>
<div style="position:absolute;left:1729.3px;top:1300px;width:200px;height:449px;overflow:hidden;"><div style="position:absolute;left:0;top:177px;width:17.5px;height:17.5px;background:#00c0e0;"></div><div style="position:absolute;left:30px;top:175px;font-family:'Liberation Sans', sans-serif;font-size:21.5px;line-height:22px;color:#555;white-space:nowrap;">https</div><div style="position:absolute;left:0;top:215px;width:17.5px;height:17.5px;background:#f9a03f;"></div><div style="position:absolute;left:30px;top:213px;font-family:'Liberation Sans', sans-serif;font-size:21.5px;line-height:22px;color:#555;white-space:nowrap;">etp</div><div style="position:absolute;left:0;top:253px;width:17.5px;height:17.5px;background:#62a6dc;"></div><div style="position:absolute;left:30px;top:251px;font-family:'Liberation Sans', sans-serif;font-size:21.5px;line-height:22px;color:#555;white-space:nowrap;">microsoft...</div><div style="position:absolute;left:0;top:291px;width:17.5px;height:17.5px;background:#5cbb6b;"></div><div style="position:absolute;left:30px;top:289px;font-family:'Liberation Sans', sans-serif;font-size:21.5px;line-height:22px;color:#555;white-space:nowrap;">http</div><div style="position:absolute;left:0;top:329px;width:17.5px;height:17.5px;background:#ee7bac;"></div><div style="position:absolute;left:30px;top:327px;font-family:'Liberation Sans', sans-serif;font-size:21.5px;line-height:22px;color:#555;white-space:nowrap;">ftrapid-1</div><div style="position:absolute;left:0;top:367px;width:17.5px;height:17.5px;background:#b09232;"></div><div style="position:absolute;left:30px;top:365px;font-family:'Liberation Sans', sans-serif;font-size:21.5px;line-height:22px;color:#555;white-space:nowrap;">webemsh...</div><div style="position:absolute;left:0;top:405px;width:17.5px;height:17.5px;background:#2d7b98;"></div><div style="position:absolute;left:30px;top:403px;font-family:'Liberation Sans', sans-serif;font-size:21.5px;line-height:22px;color:#555;white-space:nowrap;">ssh</div><div style="position:absolute;left:0;top:443px;width:17.5px;height:17.5px;background:#0a90d6;"></div><div style="position:absolute;left:30px;top:441px;font-family:'Liberation Sans', sans-serif;font-size:21.5px;line-height:22px;color:#555;white-space:nowrap;">appworxs</div></div>
<div style="position:absolute;left:1982px;top:1300px;width:878px;height:600px;background:#fff;"></div>
<div style="position:absolute;left:2001px;top:1319px;width:839px;height:101px;background:#f5f5f5;border:1px solid #e9e9e9;box-sizing:border-box;box-shadow:0 1px 2px rgba(0,0,0,0.06);"></div>
<div style="position:absolute;left:2042.00px;top:1335.47px;font-family:'Liberation Sans', sans-serif;font-size:33px;line-height:33px;font-weight:400;color:#111;white-space:nowrap;transform:scaleX(0.928);transform-origin:left center;">Top N URL by Volume</div>
<div style="position:absolute;left:2042.00px;top:1378.84px;font-family:'Liberation Sans', sans-serif;font-size:25px;line-height:25px;font-weight:400;color:#858585;white-space:nowrap;transform:scaleX(0.97);transform-origin:left center;-webkit-text-stroke:0.35px #858585;">Hourly Report</div>
<svg style="position:absolute;left:1982px;top:1300px;overflow:hidden" width="878" height="700"><defs><clipPath id="pc19821300"><rect x="151" y="100" width="500" height="484.00"/></clipPath></defs><line x1="144" y1="478.60" x2="651" y2="478.60" stroke="#e6e6e6" stroke-width="2"/><line x1="144" y1="373.20" x2="651" y2="373.20" stroke="#e6e6e6" stroke-width="2"/><line x1="144" y1="267.80" x2="651" y2="267.80" stroke="#e6e6e6" stroke-width="2"/><line x1="144" y1="162.40" x2="651" y2="162.40" stroke="#e6e6e6" stroke-width="2"/><line x1="151" y1="160" x2="151" y2="585.00" stroke="#e6e6e6" stroke-width="2"/><line x1="144" y1="584.60" x2="651" y2="584.60" stroke="#e6e6e6" stroke-width="2"/><line x1="160.00" y1="584.00" x2="160.00" y2="592.00" stroke="#e6e6e6" stroke-width="2"/><line x1="401.00" y1="584.00" x2="401.00" y2="592.00" stroke="#e6e6e6" stroke-width="2"/><line x1="642.00" y1="584.00" x2="642.00" y2="592.00" stroke="#e6e6e6" stroke-width="2"/><g clip-path="url(#pc19821300)"><path d="M401.00 584.00 L409.03 489.14 L417.07 584.00 L417.07 584.00 L401.00 584.00 Z" fill="rgba(250,175,155,0.5)" stroke="none"/><path d="M401.00 584.00 L409.03 489.14 L417.07 584.00" fill="none" stroke="#f9ad9c" stroke-width="3" stroke-linejoin="round"/><path d="M160.00 181.79 L168.03 378.68 L176.07 451.20 L184.10 484.92 L192.13 423.79 L200.17 444.87 L208.20 520.76 L216.23 474.38 L224.27 461.74 L232.30 404.82 L240.33 465.95 L248.37 520.76 L256.40 449.09 L264.43 461.74 L272.47 426.32 L280.50 436.86 L288.53 474.38 L296.57 520.76 L304.60 366.88 L312.63 433.07 L320.67 451.20 L328.70 503.90 L336.73 475.86 L344.77 458.36 L352.80 421.68 L360.83 461.74 L368.87 393.44 L376.90 520.76 L384.93 489.35 L392.97 415.36 L401.00 520.76 L409.03 520.76 L417.07 520.76 L425.10 520.76 L433.13 434.96 L441.17 520.76 L449.20 520.76 L457.23 520.76 L465.27 452.46 L473.30 429.06 L481.33 425.27 L489.37 520.76 L497.40 520.76 L505.43 520.76 L513.47 456.26 L521.50 520.76 L529.53 477.76 L537.57 520.76 L545.60 520.76 L553.63 520.76 L561.67 520.76 L569.70 520.76 L577.73 499.68 L585.77 520.76 L593.80 520.76 L601.83 520.76 L609.87 520.76 L617.90 520.76 L625.93 520.76 L633.97 520.76 L642.00 520.76 L642.00 584.00 L160.00 584.00 Z" fill="#b2dcf0" stroke="none"/><path d="M160.00 181.79 L168.03 378.68 L176.07 451.20 L184.10 484.92 L192.13 423.79 L200.17 444.87 L208.20 520.76 L216.23 474.38 L224.27 461.74 L232.30 404.82 L240.33 465.95 L248.37 520.76 L256.40 449.09 L264.43 461.74 L272.47 426.32 L280.50 436.86 L288.53 474.38 L296.57 520.76 L304.60 366.88 L312.63 433.07 L320.67 451.20 L328.70 503.90 L336.73 475.86 L344.77 458.36 L352.80 421.68 L360.83 461.74 L368.87 393.44 L376.90 520.76 L384.93 489.35 L392.97 415.36 L401.00 520.76 L409.03 520.76 L417.07 520.76 L425.10 520.76 L433.13 434.96 L441.17 520.76 L449.20 520.76 L457.23 520.76 L465.27 452.46 L473.30 429.06 L481.33 425.27 L489.37 520.76 L497.40 520.76 L505.43 520.76 L513.47 456.26 L521.50 520.76 L529.53 477.76 L537.57 520.76 L545.60 520.76 L553.63 520.76 L561.67 520.76 L569.70 520.76 L577.73 499.68 L585.77 520.76 L593.80 520.76 L601.83 520.76 L609.87 520.76 L617.90 520.76 L625.93 520.76 L633.97 520.76 L642.00 520.76" fill="none" stroke="#a9929a" stroke-width="4" stroke-linejoin="round"/></g></svg>
<div style="position:absolute;right:764.00px;top:1767.40px;font-family:'Liberation Sans', sans-serif;font-size:21.5px;line-height:21.5px;font-weight:400;color:#555;white-space:nowrap;transform:scaleX(0.93);transform-origin:right center;">50</div>
<div style="position:absolute;right:764.00px;top:1662.00px;font-family:'Liberation Sans', sans-serif;font-size:21.5px;line-height:21.5px;font-weight:400;color:#555;white-space:nowrap;transform:scaleX(0.93);transform-origin:right center;">100</div>
<div style="position:absolute;right:764.00px;top:1556.60px;font-family:'Liberation Sans', sans-serif;font-size:21.5px;line-height:21.5px;font-weight:400;color:#555;white-space:nowrap;transform:scaleX(0.93);transform-origin:right center;">150</div>
<div style="position:absolute;right:764.00px;top:1451.20px;font-family:'Liberation Sans', sans-serif;font-size:21.5px;line-height:21.5px;font-weight:400;color:#555;white-space:nowrap;transform:scaleX(0.93);transform-origin:right center;">200</div>
<div style="position:absolute;left:2142.00px;top:1897.65px;font-family:'Liberation Sans', sans-serif;font-size:20.5px;line-height:20.5px;font-weight:400;color:#555;white-space:nowrap;transform:translateX(-50%) ;transform-origin:center center;">18:25</div>
<div style="position:absolute;left:2383.00px;top:1897.65px;font-family:'Liberation Sans', sans-serif;font-size:20.5px;line-height:20.5px;font-weight:400;color:#555;white-space:nowrap;transform:translateX(-50%) ;transform-origin:center center;">18:55</div>
<div style="position:absolute;left:2624.00px;top:1897.65px;font-family:'Liberation Sans', sans-serif;font-size:20.5px;line-height:20.5px;font-weight:400;color:#555;white-space:nowrap;transform:translateX(-50%) ;transform-origin:center center;">19:25</div>
<div style="position:absolute;left:2055px;top:1671px;width:0;height:0;"><div style="position:absolute;left:0;top:0;transform:translate(-50%,-50%) rotate(-90deg);font-family:'Liberation Sans', sans-serif;font-size:21.5px;line-height:22px;color:#555;white-space:nowrap;">in bytes</div></div>
<div style="position:absolute;left:2627px;top:1300px;width:200px;height:449px;overflow:hidden;"><div style="position:absolute;left:0;top:177px;width:17.5px;height:17.5px;background:#00c0e0;"></div><div style="position:absolute;left:30px;top:175px;font-family:'Liberation Sans', sans-serif;font-size:21.5px;line-height:22px;color:#555;white-space:nowrap;">5d0b6.v.f...</div><div style="position:absolute;left:0;top:215px;width:17.5px;height:17.5px;background:#f9a03f;"></div><div style="position:absolute;left:30px;top:213px;font-family:'Liberation Sans', sans-serif;font-size:21.5px;line-height:22px;color:#555;white-space:nowrap;">aa.agkn.c...</div><div style="position:absolute;left:0;top:253px;width:17.5px;height:17.5px;background:#62a6dc;"></div><div style="position:absolute;left:30px;top:251px;font-family:'Liberation Sans', sans-serif;font-size:21.5px;line-height:22px;color:#555;white-space:nowrap;">a1998.cas...</div><div style="position:absolute;left:0;top:291px;width:17.5px;height:17.5px;background:#5cbb6b;"></div><div style="position:absolute;left:30px;top:289px;font-family:'Liberation Sans', sans-serif;font-size:21.5px;line-height:22px;color:#555;white-space:nowrap;">a1964.cas...</div><div style="position:absolute;left:0;top:329px;width:17.5px;height:17.5px;background:#ee7bac;"></div><div style="position:absolute;left:30px;top:327px;font-family:'Liberation Sans', sans-serif;font-size:21.5px;line-height:22px;color:#555;white-space:nowrap;">a424.casa...</div><div style="position:absolute;left:0;top:367px;width:17.5px;height:17.5px;background:#b09232;"></div><div style="position:absolute;left:30px;top:365px;font-family:'Liberation Sans', sans-serif;font-size:21.5px;line-height:22px;color:#555;white-space:nowrap;">a2100.cas...</div><div style="position:absolute;left:0;top:405px;width:17.5px;height:17.5px;background:#2d7b98;"></div><div style="position:absolute;left:30px;top:403px;font-family:'Liberation Sans', sans-serif;font-size:21.5px;line-height:22px;color:#555;white-space:nowrap;">a248.e.ak...</div><div style="position:absolute;left:0;top:443px;width:17.5px;height:17.5px;background:#0a90d6;"></div><div style="position:absolute;left:30px;top:441px;font-family:'Liberation Sans', sans-serif;font-size:21.5px;line-height:22px;color:#555;white-space:nowrap;">UNCLASSI</div></div>
</body></html>
